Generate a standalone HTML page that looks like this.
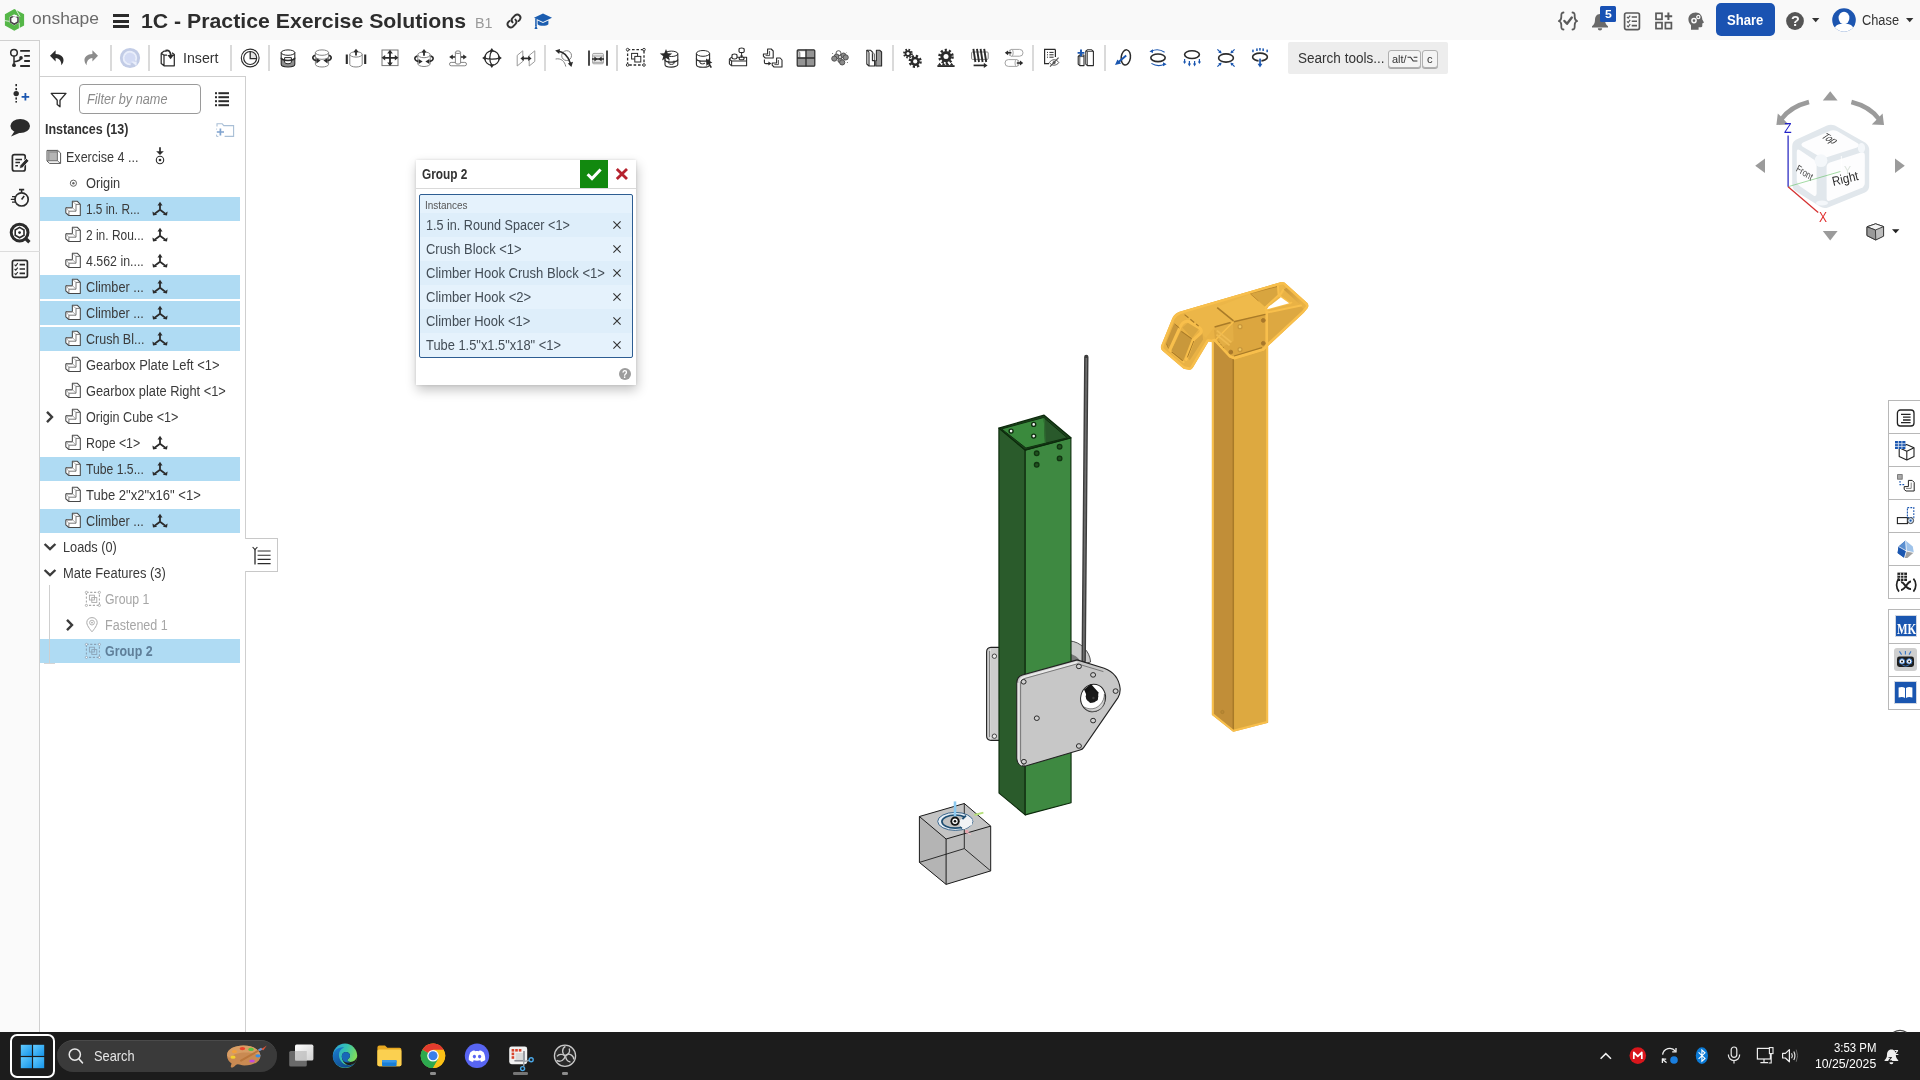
<!DOCTYPE html>
<html><head><meta charset="utf-8"><title>Onshape</title>
<style>
html,body{margin:0;padding:0;}
body{width:1920px;height:1080px;overflow:hidden;background:#fff;font-family:"Liberation Sans",sans-serif;position:relative;}
.a{position:absolute;display:block;}
.t{position:absolute;white-space:nowrap;transform-origin:0 50%;}
#w{position:absolute;left:0;top:0;width:1920px;height:1080px;will-change:transform;}
</style></head><body><div id="w">
<div class="a" style="left:0px;top:0px;width:1920px;height:40px;background:#f9f9f9;"></div>
<div class="a" style="left:0px;top:40px;width:1920px;height:36px;background:#fff;"></div>
<div class="a" style="left:0px;top:40px;width:40px;height:992px;background:#fafafa;border-right:1px solid #d0d0d0;box-sizing:border-box;"></div>
<div class="a" style="left:40px;top:76px;width:206px;height:956px;background:#fff;border-top:1px solid #cfcfcf;border-right:1px solid #cfcfcf;box-sizing:border-box;"></div>
<div class="a" style="left:0px;top:1032px;width:1920px;height:48px;background:#1c1c1c;"></div>
<div class="a" style="left:0px;top:40px;width:40px;height:1px;background:#d0d0d0;"></div>
<svg class="a" style="left:3px;top:7px;" width="24" height="26" viewBox="0 0 24 26">
<path d="M11.3 1.9 L21.1 7.3 V18.5 L11.3 23.7 L1.9 18.5 V7.3 Z M11.3 7.2 L6.5 10 V15.6 L11.3 18.4 L16.1 15.6 V10 Z" fill="#55b748" fill-rule="evenodd"/>
<path d="M13.2 3 L17 9.6 M1.9 13.6 L6.6 14.4 M16.2 15.8 L16.4 21" stroke="#f9f9f9" stroke-width="0.8"/>
<polygon points="11.3,8.6 15,10.8 15,15 11.3,17.2 7.6,15 7.6,10.8" fill="#fbfbfb" stroke="#4a4a4a" stroke-width="1.6"/>
<path d="M9.6 8.8 L13 8.8 L13 10.6" fill="none" stroke="#fbfbfb" stroke-width="1.4"/>
</svg>
<div class="t" style="left:31.80px;top:9.00px;font-size:17px;line-height:19.000px;color:#6a6a6a;transform:scaleX(1.0272);">onshape</div>
<div class="a" style="left:113px;top:14px;width:16px;height:3px;background:#2b2b2b;"></div>
<div class="a" style="left:113px;top:19.5px;width:16px;height:3px;background:#2b2b2b;"></div>
<div class="a" style="left:113px;top:25px;width:16px;height:3px;background:#2b2b2b;"></div>
<div class="t" style="left:141.20px;top:9.00px;font-size:20.5px;line-height:23.000px;color:#2d2d2d;transform:scaleX(1.0373);font-weight:bold;">1C - Practice Exercise Solutions</div>
<div class="t" style="left:475.00px;top:15.00px;font-size:14.5px;line-height:16.000px;color:#9a9a9a;transform:scaleX(0.9867);">B1</div>
<svg class="a" style="left:504px;top:11px;" width="20" height="20" viewBox="0 0 20 20"><g fill="none" stroke="#333" stroke-width="1.9" stroke-linecap="round">
<path d="M8.6 11.4 a3.2 3.2 0 0 1 0 -4.5 l2.6 -2.6 a3.2 3.2 0 0 1 4.5 4.5 l-1.3 1.3"/>
<path d="M11.4 8.6 a3.2 3.2 0 0 1 0 4.5 l-2.6 2.6 a3.2 3.2 0 0 1 -4.5 -4.5 l1.3 -1.3"/></g></svg>
<svg class="a" style="left:533px;top:11px;" width="20" height="20" viewBox="0 0 20 20"><g fill="#1b5db0"><polygon points="10,2.5 19,6.8 10,11 1,6.8"/>
<path d="M4.6 9.4 V13.2 C6.5 15.4 13.5 15.4 15.4 13.2 V9.4 L10 12 Z"/>
<rect x="2.2" y="7.5" width="1.5" height="7.5"/><polygon points="1.5,18 4.5,18 3,13.5"/></g></svg>
<svg class="a" style="left:1556px;top:10px;" width="24" height="22" viewBox="0 0 24 22"><g fill="none" stroke="#5a5a5a" stroke-width="1.8" stroke-linecap="round" stroke-linejoin="round">
<path d="M7.5 2.5 C5 2.5 5.3 5 5.3 7 C5.3 9.5 4.5 10.5 2.8 11 C4.5 11.5 5.3 12.5 5.3 15 C5.3 17 5 19.5 7.5 19.5"/>
<path d="M16.5 2.5 C19 2.5 18.7 5 18.7 7 C18.7 9.5 19.5 10.5 21.2 11 C19.5 11.5 18.7 12.5 18.7 15 C18.7 17 19 19.5 16.5 19.5"/>
<path d="M8.4 11 L11 13.8 L15.8 7.6" stroke-width="2.4"/></g></svg>
<svg class="a" style="left:1590px;top:12px;" width="20" height="20" viewBox="0 0 20 20"><g fill="#6a6a6a"><path d="M10 2 C6.5 2 5 5 5 8 C5 11.5 3.5 13 2 14.3 V15.4 H18 V14.3 C16.5 13 15 11.5 15 8 C15 5 13.5 2 10 2 Z"/>
<path d="M7.8 16.2 a2.2 2.2 0 0 0 4.4 0 Z"/></g></svg>
<div class="a" style="left:1600px;top:6px;width:16px;height:15.5px;background:#1851b4;border-radius:1.5px;"></div>
<div class="t" style="left:1604.80px;top:8.00px;font-size:11.5px;line-height:12.000px;color:#fff;transform:scaleX(1.0632);font-weight:bold;">5</div>
<svg class="a" style="left:1622px;top:11px;" width="20" height="20" viewBox="0 0 20 20"><rect x="2.6" y="2" width="14.8" height="16.6" rx="1.8" fill="none" stroke="#5a5a5a" stroke-width="1.7"/>
<g stroke="#5a5a5a" stroke-width="1.6" fill="none"><path d="M9.7 6 H15 M9.7 10.3 H15 M9.7 14.6 H15"/>
<path d="M5 6 l1.2 1.2 l2 -2.6 M5 10.3 l1.2 1.2 l2 -2.6 M5 14.6 l1.2 1.2 l2 -2.6" stroke-width="1.2"/></g></svg>
<svg class="a" style="left:1654px;top:11px;" width="20" height="20" viewBox="0 0 20 20"><g fill="none" stroke="#5a5a5a" stroke-width="1.7"><rect x="2" y="2.3" width="6" height="6"/><rect x="2" y="11.6" width="6" height="6"/><rect x="11.4" y="11.6" width="6" height="6"/>
<path d="M14.4 1.5 V9 M10.7 5.3 H18.2" stroke-width="2"/></g></svg>
<svg class="a" style="left:1686px;top:11px;" width="20" height="20" viewBox="0 0 20 20"><path d="M9.8 1.6 C5.2 1.6 2.4 4.8 2.4 8.6 C2.4 11.3 3.8 13 5 14.2 V18.8 H12.6 V16.2 H15 C16 16.2 16.3 15.6 16.3 14.8 V12.4 L18 11.6 L16.3 8.4 C16.3 4.4 13.6 1.6 9.8 1.6 Z" fill="#666"/>
<circle cx="8" cy="9.6" r="2.1" fill="none" stroke="#f9f9f9" stroke-width="1.5"/><circle cx="12.3" cy="6" r="1.6" fill="none" stroke="#f9f9f9" stroke-width="1.3"/></svg>
<div class="a" style="left:1716px;top:3px;width:59px;height:33px;background:#1a53b2;border-radius:5px;"></div>
<div class="t" style="left:1727.00px;top:11.00px;font-size:15px;line-height:17.000px;color:#fff;transform:scaleX(0.8731);font-weight:bold;">Share</div>
<svg class="a" style="left:1785px;top:11px;" width="20" height="20" viewBox="0 0 20 20"><circle cx="10" cy="10" r="8.9" fill="#555"/></svg>
<div class="t" style="left:1790.60px;top:12.20px;font-size:15.5px;line-height:17.000px;color:#f9f9f9;transform:scaleX(0.9294);font-weight:bold;">?</div>
<svg class="a" style="left:1812px;top:18px;" width="8" height="5" viewBox="0 0 8 5"><polygon points="0,0 7.4,0 3.7,4.2" fill="#333"/></svg>
<svg class="a" style="left:1831px;top:8px;" width="26" height="24" viewBox="0 0 26 24"><defs><clipPath id="avc"><circle cx="13" cy="12" r="11.8"/></clipPath></defs>
<circle cx="13" cy="12" r="11.8" fill="#1c55b0"/>
<g clip-path="url(#avc)" fill="#fff"><ellipse cx="13" cy="10" rx="5.4" ry="6.2"/><path d="M2.5 25 C2.5 17.5 7 15.8 13 15.8 C19 15.8 23.5 17.5 23.5 25 Z"/></g></svg>
<div class="t" style="left:1861.60px;top:11.00px;font-size:15.5px;line-height:17.000px;color:#333;transform:scaleX(0.8258);">Chase</div>
<svg class="a" style="left:1906px;top:18px;" width="8" height="5" viewBox="0 0 8 5"><polygon points="0,0 7.4,0 3.7,4.2" fill="#333"/></svg>
<div class="a" style="left:110px;top:45px;width:2px;height:26px;background:#dadada;"></div>
<div class="a" style="left:148px;top:45px;width:2px;height:26px;background:#dadada;"></div>
<div class="a" style="left:230px;top:45px;width:2px;height:26px;background:#dadada;"></div>
<div class="a" style="left:268px;top:45px;width:2px;height:26px;background:#dadada;"></div>
<div class="a" style="left:544px;top:45px;width:2px;height:26px;background:#dadada;"></div>
<div class="a" style="left:616px;top:45px;width:2px;height:26px;background:#dadada;"></div>
<div class="a" style="left:892px;top:45px;width:2px;height:26px;background:#dadada;"></div>
<div class="a" style="left:1032px;top:45px;width:2px;height:26px;background:#dadada;"></div>
<div class="a" style="left:1104px;top:45px;width:2px;height:26px;background:#dadada;"></div>
<svg class="a" style="left:45px;top:46px;" width="24" height="24" viewBox="0 0 24 24"><path d="M5 9.8 L10.6 4.2 V8 C15.6 8 18.9 11 18.5 14.6 C18.3 16.6 17.4 18.2 16.3 19.2 C16.6 15.6 14.6 12.2 10.6 12 V15.6 Z" fill="#2b2b2b"/></svg>
<svg class="a" style="left:79px;top:46px;" width="24" height="24" viewBox="0 0 24 24"><path d="M19 9.8 L13.4 4.2 V8 C8.4 8 5.1 11 5.5 14.6 C5.7 16.6 6.6 18.2 7.7 19.2 C7.4 15.6 9.4 12.2 13.4 12 V15.6 Z" fill="#8c8c8c"/></svg>
<svg class="a" style="left:118px;top:46px;" width="24" height="24" viewBox="0 0 24 24"><circle cx="12" cy="12" r="10.1" fill="#c2cce6"/><circle cx="12" cy="12" r="5.4" fill="#d3dbf4"/>
<path d="M12.6 18.3 A6.3 6.3 0 1 1 17.6 14.8" fill="none" stroke="#e9eefb" stroke-width="1.9"/><polygon points="13.2,15.4 18.6,15.4 18.6,20.2 15.4,17.6" fill="#e9eefb"/></svg>
<svg class="a" style="left:156px;top:46px;" width="24" height="24" viewBox="0 0 24 24"><g fill="none" stroke="#2b2b2b" stroke-width="1.25" stroke-linejoin="round"><path d="M5.2 7.2 L8.2 5 H10.5 M5.2 7.2 V17.6 L8 19.8 H18.3 V8.6 L16 6.8 M8 9.2 V19.8 M5.2 7.2 L8 9.2 H11"/></g>
<path d="M9.5 4.6 C12.5 3.6 14.6 5.5 14.6 9" fill="none" stroke="#2b2b2b" stroke-width="1.7"/><polygon points="11.3,9 17.9,9 14.6,13.2" fill="#2b2b2b"/>
<path d="M15 9.2 H18.3" stroke="#2b2b2b" stroke-width="1.25"/></svg>
<div class="t" style="left:182.50px;top:49.00px;font-size:15.5px;line-height:17.000px;color:#333;transform:scaleX(0.9158);">Insert</div>
<svg class="a" style="left:238px;top:46px;" width="24" height="24" viewBox="0 0 24 24"><circle cx="12.2" cy="12" r="8.9" fill="#fff" stroke="#2b2b2b" stroke-width="1.1"/><path d="M12.2 12 V5.6 A6.4 6.4 0 0 1 18.6 12 Z" fill="#e4e4e4"/>
<circle cx="12.2" cy="12" r="6.5" fill="none" stroke="#2b2b2b" stroke-width="1.2"/><path d="M12.2 5.6 V12.6 H18.6" fill="none" stroke="#2b2b2b" stroke-width="1.3"/></svg>
<svg class="a" style="left:276px;top:46px;" width="24" height="24" viewBox="0 0 24 24"><path d="M5.2 13 V18.3 A6.8 2.7 0 0 0 18.8 18.3 V13 Z" fill="#8d8d8d"/>
<path d="M8.6 11.6 V16 Q8.6 17.8 12 17.8 Q15.4 17.8 15.4 16 V11.6 Z" fill="#fff" stroke="#2b2b2b" stroke-width="1"/>
<ellipse cx="12" cy="6.6" rx="6.8" ry="2.7" fill="#fff" stroke="#2b2b2b" stroke-width="1"/>
<path d="M5.2 6.6 V18.3 A6.8 2.7 0 0 0 18.8 18.3 V6.6" fill="none" stroke="#2b2b2b" stroke-width="1.1"/>
<path d="M5.2 11.8 A6.8 2.7 0 0 0 18.8 11.8" fill="none" stroke="#2b2b2b" stroke-width="1.6"/></svg>
<svg class="a" style="left:310px;top:46px;" width="24" height="24" viewBox="0 0 24 24"><ellipse cx="12" cy="6.6" rx="6.6" ry="2.7" fill="#fff" stroke="#777" stroke-width="0.9"/>
<path d="M5.4 6.6 V18.3 A6.6 2.7 0 0 0 18.6 18.3 V6.6" fill="none" stroke="#777" stroke-width="0.9"/>
<path d="M5.4 10.6 A6.6 2.7 0 0 0 18.6 10.6" fill="none" stroke="#777" stroke-width="0.9"/>
<path d="M5 9.2 C1.6 10.6 2.2 14 6.6 14.6 M19 9.2 C22.4 10.6 21.8 14 17.4 14.6" fill="none" stroke="#2b2b2b" stroke-width="1.6"/>
<polygon points="6.4,12 10.6,14.6 6.4,17.4" fill="#2b2b2b"/><polygon points="17.6,12 13.4,14.6 17.6,17.4" fill="#2b2b2b"/></svg>
<svg class="a" style="left:344px;top:46px;" width="24" height="24" viewBox="0 0 24 24"><ellipse cx="12" cy="8.4" rx="6.2" ry="2.7" fill="#fff" stroke="#777" stroke-width="0.9"/>
<path d="M5.8 8.4 V18.3 A6.2 2.7 0 0 0 18.2 18.3 V8.4" fill="none" stroke="#777" stroke-width="0.9"/>
<path d="M2.8 8.6 V18 M21.2 8.6 V18" stroke="#2b2b2b" stroke-width="2.1"/>
<path d="M12 5 V9.6" stroke="#2b2b2b" stroke-width="1.8"/><polygon points="9.3,6.2 12,2.8 14.7,6.2" fill="#2b2b2b"/></svg>
<svg class="a" style="left:378px;top:46px;" width="24" height="24" viewBox="0 0 24 24"><rect x="4" y="4" width="16" height="15.6" fill="#fff" stroke="#777" stroke-width="1"/>
<path d="M12 6 V18 M5.5 11.8 H18.5" stroke="#2b2b2b" stroke-width="1.8"/>
<polygon points="9.2,7.4 12,3.8 14.8,7.4" fill="#2b2b2b"/><polygon points="9.2,16.4 12,20 14.8,16.4" fill="#2b2b2b"/>
<polygon points="7.2,9 3.6,11.8 7.2,14.6" fill="#2b2b2b"/><polygon points="16.8,9 20.4,11.8 16.8,14.6" fill="#2b2b2b"/></svg>
<svg class="a" style="left:412px;top:46px;" width="24" height="24" viewBox="0 0 24 24"><ellipse cx="12" cy="8.8" rx="6.2" ry="2.9" fill="#fff" stroke="#777" stroke-width="0.9"/>
<path d="M5.8 8.8 V17.8 A6.2 2.7 0 0 0 18.2 17.8 V8.8" fill="none" stroke="#777" stroke-width="0.9"/>
<path d="M12 5.4 V9.8" stroke="#2b2b2b" stroke-width="1.8"/><polygon points="9.4,6.4 12,3 14.6,6.4" fill="#2b2b2b"/>
<path d="M5.2 10 C1.6 11.4 2.2 14.6 6.4 15.4 M18.8 10 C22.4 11.4 21.8 14.6 17.6 15.4" fill="none" stroke="#2b2b2b" stroke-width="1.6"/>
<polygon points="6.6,13 10.6,15.4 6.6,18" fill="#2b2b2b"/><polygon points="17.4,13 13.4,15.4 17.4,18" fill="#2b2b2b"/></svg>
<svg class="a" style="left:446px;top:46px;" width="24" height="24" viewBox="0 0 24 24"><path d="M5.2 16.4 H18.8 A1.6 1.6 0 0 1 18.8 19.8 H5.2 A1.6 1.6 0 0 1 5.2 16.4 Z" fill="#fff" stroke="#777" stroke-width="0.9"/>
<path d="M9.4 6.2 V17 A2.6 1.1 0 0 0 14.6 17 V6.2" fill="#fff" stroke="#777" stroke-width="0.9"/><ellipse cx="12" cy="6.2" rx="2.6" ry="1.3" fill="#fff" stroke="#777" stroke-width="0.9"/>
<path d="M5 11 H9 M15 11 H19" stroke="#2b2b2b" stroke-width="1.7"/><polygon points="6.8,8.4 3.2,11 6.8,13.6" fill="#2b2b2b"/><polygon points="17.2,8.4 20.8,11 17.2,13.6" fill="#2b2b2b"/></svg>
<svg class="a" style="left:480px;top:46px;" width="24" height="24" viewBox="0 0 24 24"><circle cx="12" cy="12" r="7.2" fill="none" stroke="#2b2b2b" stroke-width="1.3"/>
<path d="M12 4.8 C9 8 9 16 12 19.2 M4.8 12 C8 13.6 16 13.6 19.2 12" fill="none" stroke="#2b2b2b" stroke-width="1.3"/>
<polygon points="9.4,5.4 11.8,2 14.2,5.4" fill="#2b2b2b"/><polygon points="9.4,18.6 11.8,22 14.2,18.6" fill="#2b2b2b"/>
<polygon points="5.6,9.4 2.2,12 5.6,14.6" fill="#2b2b2b"/><polygon points="18.4,9.4 21.8,12 18.4,14.6" fill="#2b2b2b"/></svg>
<svg class="a" style="left:514px;top:46px;" width="24" height="24" viewBox="0 0 24 24"><path d="M3.2 9.4 L8.8 4.8 V15.4 L3.2 20 Z M15.2 9.4 L20.8 4.8 V15.4 L15.2 20 Z" fill="#fff" stroke="#9a9a9a" stroke-width="1"/>
<path d="M8 12.4 H16" stroke="#2b2b2b" stroke-width="1.7"/><polygon points="9.8,9.8 6.4,12.4 9.8,15" fill="#2b2b2b"/><polygon points="14.2,9.8 17.6,12.4 14.2,15" fill="#2b2b2b"/></svg>
<svg class="a" style="left:552px;top:46px;" width="24" height="24" viewBox="0 0 24 24"><circle cx="14.6" cy="9.6" r="4.9" fill="none" stroke="#777" stroke-width="0.9"/>
<path d="M3.6 13 C9 12 12.6 15 13.8 20.6" fill="none" stroke="#777" stroke-width="0.9"/>
<path d="M5.4 5 C11 5.6 16.4 10 18.6 18" fill="none" stroke="#2b2b2b" stroke-width="1.6"/>
<polygon points="3.2,4.6 8,3 7.2,8" fill="#2b2b2b"/><polygon points="15.8,17.4 21,15.8 19.4,21" fill="#2b2b2b"/></svg>
<svg class="a" style="left:586px;top:46px;" width="24" height="24" viewBox="0 0 24 24"><rect x="6.6" y="7.4" width="10.8" height="10.4" rx="1.2" fill="#e8e8e8" stroke="#9a9a9a" stroke-width="0.9"/>
<path d="M6.6 10 H17.4 M6.6 16.4 H17.4" stroke="#9a9a9a" stroke-width="0.8"/>
<path d="M3 4.4 V19.8 M21 4.4 V19.8" stroke="#2b2b2b" stroke-width="1.7"/><path d="M6 13 H18" stroke="#2b2b2b" stroke-width="1.5"/>
<polygon points="8.4,10.6 11.6,13 8.4,15.4" fill="#2b2b2b"/><polygon points="15.6,10.6 12.4,13 15.6,15.4" fill="#2b2b2b"/></svg>
<svg class="a" style="left:624px;top:46px;" width="24" height="24" viewBox="0 0 24 24"><rect x="3.6" y="3.6" width="16.4" height="15.4" fill="none" stroke="#2b2b2b" stroke-width="1.3" stroke-dasharray="2.6 1.8"/>
<g fill="#fff" stroke="#2b2b2b" stroke-width="0.9"><circle cx="3.6" cy="3.6" r="1.3"/><circle cx="20" cy="3.6" r="1.3"/><circle cx="3.6" cy="19" r="1.3"/><circle cx="20" cy="19" r="1.3"/></g>
<rect x="7.6" y="7.4" width="6" height="5.6" fill="#fff" stroke="#2b2b2b" stroke-width="1"/><rect x="10.8" y="10.4" width="6" height="5.6" fill="#fff" stroke="#2b2b2b" stroke-width="1"/></svg>
<svg class="a" style="left:658px;top:46px;" width="24" height="24" viewBox="0 0 24 24"><ellipse cx="13.4" cy="7.8" rx="6.4" ry="2.7" fill="#fff" stroke="#2b2b2b" stroke-width="1"/>
<path d="M7 7.8 V18.4 A6.4 2.7 0 0 0 19.8 18.4 V7.8" fill="none" stroke="#2b2b2b" stroke-width="1.1"/>
<path d="M7 13.4 A6.4 2.7 0 0 0 19.8 13.4" fill="none" stroke="#2b2b2b" stroke-width="1.4"/>
<path d="M10.8 14.6 V17.2 A2.6 1.2 0 0 0 16 17.2 V14.6" fill="none" stroke="#2b2b2b" stroke-width="1"/>
<polygon points="8,3 9.7,7.2 14.2,7.4 10.7,10.2 11.9,14.6 8,12.1 4.1,14.6 5.3,10.2 1.8,7.4 6.3,7.2" fill="#2b2b2b"/></svg>
<svg class="a" style="left:692px;top:46px;" width="24" height="24" viewBox="0 0 24 24"><ellipse cx="11" cy="7.4" rx="6.6" ry="2.9" fill="#fff" stroke="#2b2b2b" stroke-width="1"/>
<path d="M4.4 7.4 V18.4 A6.6 2.8 0 0 0 17.6 18.4 V7.4" fill="none" stroke="#2b2b2b" stroke-width="1.1"/>
<path d="M4.4 12.4 A6.6 2.8 0 0 0 17.6 12.4" fill="none" stroke="#2b2b2b" stroke-width="1.3"/>
<path d="M8 14.6 V17 A2.6 1.2 0 0 0 13 17" fill="none" stroke="#2b2b2b" stroke-width="1"/>
<polygon points="14,12.6 14.4,20 16.3,18.2 18.6,22 20,21.2 17.7,17.4 20.4,16.8" fill="#2b2b2b"/></svg>
<svg class="a" style="left:726px;top:46px;" width="24" height="24" viewBox="0 0 24 24"><g fill="#fff" stroke="#2b2b2b" stroke-width="1.1" stroke-linejoin="round"><path d="M3.4 13.2 L5.6 11.2 H20.6 V19.8 H5.6 L3.4 17.8 Z"/><path d="M5.6 15 H20.6 M3.4 13.2 L5.6 15 V19.8"/>
<path d="M6 11.6 V9.4 A2.5 1.4 0 0 1 11 9.4 V11.6 A2.5 1.4 0 0 1 6 11.6 Z"/><ellipse cx="15.6" cy="12.4" rx="2.5" ry="1.4"/>
<path d="M13 5.2 V3.4 A2.6 1.4 0 0 1 18.2 3.4 V5.2 A2.6 1.4 0 0 1 13 5.2 Z"/></g>
<path d="M15.6 6.6 V11" stroke="#2b2b2b" stroke-width="1"/><polygon points="14,9.6 17.2,9.6 15.6,12" fill="#2b2b2b"/></svg>
<svg class="a" style="left:760px;top:46px;" width="24" height="24" viewBox="0 0 24 24"><g fill="#fff" stroke="#2b2b2b" stroke-width="1.1" stroke-linejoin="round"><path d="M7.6 3 H11.2 L13.2 5 V12 H5.2 L3.4 10.2 V8 H7.6 Z"/><path d="M5.6 9.6 H9.6 V5" fill="none" stroke-width="0.8"/>
<path d="M16.6 12 H20.2 L22 14 V21 H14 L12.2 19.2 V17 H16.6 Z"/><path d="M14.4 18.6 H18.4 V14" fill="none" stroke-width="0.8"/></g>
<path d="M4.4 13.4 V16.2 Q4.4 17.6 5.8 17.6 H9" fill="none" stroke="#2b2b2b" stroke-width="1.1"/><polygon points="8.4,15.6 11.4,17.6 8.4,19.6" fill="#2b2b2b"/></svg>
<svg class="a" style="left:794px;top:46px;" width="24" height="24" viewBox="0 0 24 24"><rect x="3.2" y="3.8" width="17.6" height="16.4" rx="1" fill="#949494" stroke="#2b2b2b" stroke-width="1.2"/>
<rect x="4.6" y="5.2" width="7" height="6.4" fill="#fff"/><path d="M12 3.8 V20.2 M3.2 12 H20.8" stroke="#2b2b2b" stroke-width="1.3"/>
<path d="M4.4 5 L5.8 6.4 V11.4" fill="none" stroke="#2b2b2b" stroke-width="0.7"/></svg>
<svg class="a" style="left:828px;top:46px;" width="24" height="24" viewBox="0 0 24 24"><g stroke="#4a4a4a" stroke-width="0.9"><circle cx="10.5" cy="7.2" r="2.5" fill="#fff"/><circle cx="8.6" cy="10.4" r="2.4" fill="#8a8a8a"/><circle cx="6.3" cy="12.6" r="2.6" fill="#8a8a8a"/><circle cx="15.5" cy="9.4" r="2.4" fill="#8a8a8a"/>
<circle cx="17.7" cy="11.4" r="2.6" fill="#8a8a8a"/><circle cx="12.2" cy="14.4" r="2.3" fill="#8a8a8a"/><circle cx="14.2" cy="16.4" r="2.6" fill="#8a8a8a"/><circle cx="12" cy="11" r="1.5" fill="#fff"/></g>
<g fill="#555"><circle cx="4.6" cy="7.6" r="0.5"/><circle cx="19.4" cy="16.6" r="0.5"/><circle cx="18.6" cy="6.6" r="0.4"/></g></svg>
<svg class="a" style="left:862px;top:46px;" width="24" height="24" viewBox="0 0 24 24"><g stroke="#2b2b2b" stroke-width="1.1" stroke-linejoin="round"><path d="M4.8 4.2 H8.4 L10.4 6 V14.6 H12.6 V20 H7 L4.8 18 Z" fill="#fff"/><path d="M7 6.2 V20 M4.8 4.2 L7 6.2" fill="none"/>
<path d="M14.4 4.2 H17.6 L19.6 6 V20 H13.8 V14.6 H14.4 Z" fill="#9a9a9a"/><path d="M10.4 6 L12.4 8 V14.6" fill="#e0e0e0" stroke-width="0.7"/></g></svg>
<svg class="a" style="left:900px;top:46px;" width="24" height="24" viewBox="0 0 24 24"><circle cx="8" cy="7.6" r="3.3000000000000003" fill="#2b2b2b"/><circle cx="8" cy="7.6" r="3.9000000000000004" fill="none" stroke="#2b2b2b" stroke-width="2.0" stroke-dasharray="1.593 1.470"/><circle cx="8" cy="7.6" r="1.5" fill="#fff"/><circle cx="15.2" cy="15.4" r="4.6000000000000005" fill="#2b2b2b"/><circle cx="15.2" cy="15.4" r="5.4" fill="none" stroke="#2b2b2b" stroke-width="2.4" stroke-dasharray="2.205 2.036"/><circle cx="15.2" cy="15.4" r="2.1" fill="#fff"/></svg>
<svg class="a" style="left:934px;top:46px;" width="24" height="24" viewBox="0 0 24 24"><circle cx="12" cy="10.6" r="5.6000000000000005" fill="#2b2b2b"/><circle cx="12" cy="10.6" r="6.5" fill="none" stroke="#2b2b2b" stroke-width="2.599999999999999" stroke-dasharray="2.124 1.960"/><circle cx="12" cy="10.6" r="2.5" fill="#fff"/><rect x="3.4" y="19.2" width="17.2" height="1.8" fill="#2b2b2b"/><path d="M3.6 19.6 L5.6 16.8 L7.6 19.6 L9.6 16.8 L11.6 19.6 L13.6 16.8 L15.6 19.6 L17.6 16.8 L19.6 19.6" fill="#2b2b2b"/></svg>
<svg class="a" style="left:968px;top:46px;" width="24" height="24" viewBox="0 0 24 24"><rect x="3.6" y="6" width="16.6" height="7.4" rx="1" fill="#fff" stroke="#777" stroke-width="0.9"/>
<path d="M5.4 2.8 L7.4 16 M9 2.8 L11 16 M12.6 2.8 L14.6 16 M16.2 2.8 L18.2 16" stroke="#2b2b2b" stroke-width="1.9"/>
<path d="M5.6 19.4 H17" stroke="#2b2b2b" stroke-width="1.7"/><polygon points="15.8,16.8 19.6,19.4 15.8,22" fill="#2b2b2b"/></svg>
<svg class="a" style="left:1002px;top:46px;" width="24" height="24" viewBox="0 0 24 24"><g fill="#fff" stroke="#9a9a9a" stroke-width="0.9"><rect x="6.6" y="3.4" width="14.4" height="6.8" rx="3.4"/><rect x="3" y="13.6" width="14.4" height="6.8" rx="3.4"/><ellipse cx="9.6" cy="6.8" rx="1.6" ry="3.4"/><ellipse cx="14.6" cy="17" rx="1.6" ry="3.4"/></g>
<path d="M5 6.8 H9.4 M14.8 17 H19" stroke="#2b2b2b" stroke-width="1.6"/><polygon points="6,4.4 2.8,6.8 6,9.2" fill="#2b2b2b"/><polygon points="18,14.6 21.2,17 18,19.4" fill="#2b2b2b"/></svg>
<svg class="a" style="left:1040px;top:46px;" width="24" height="24" viewBox="0 0 24 24"><path d="M15.4 3.4 H4.6 V17.6 H9" fill="none" stroke="#2b2b2b" stroke-width="1.2"/><path d="M15.4 3.4 V11" stroke="#2b2b2b" stroke-width="1.2"/>
<path d="M7 6.4 H8 M9.4 6.4 H13.6 M7 8.8 H8 M9.4 8.8 H13.6 M7 11.2 H8 M9.4 11.2 H13.6" stroke="#2b2b2b" stroke-width="1"/>
<path d="M9.4 16.6 C11.6 12.8 16.6 12.8 18.8 16.6 C16.6 20 11.6 20 9.4 16.6 Z" fill="none" stroke="#555" stroke-width="1"/><circle cx="14.1" cy="16.6" r="1.5" fill="#555"/>
<path d="M10 20.6 L18.6 11.6" stroke="#555" stroke-width="1.2"/></svg>
<svg class="a" style="left:1074px;top:46px;" width="24" height="24" viewBox="0 0 24 24"><g fill="#fff" stroke="#2b2b2b" stroke-width="1.1" stroke-linejoin="round"><path d="M4.2 10.4 L5.8 9 H10 V19.6 H5.8 L4.2 18.2 Z"/><path d="M5.8 10.6 V19.6 M4.2 10.4 L5.8 10.6 H10" fill="none" stroke-width="0.8"/>
<path d="M11.8 5.2 L13.4 3.8 H17.6 L19.4 5.4 V19.6 H13.4 L11.8 18.2 Z"/><path d="M13.4 5.4 V19.6 M13.4 5.4 H19.4 M11.8 5.2 L13.4 5.4" fill="none" stroke-width="0.8"/></g>
<path d="M7 3.6 V10.2 M3.6 6.9 H10.4" stroke="#1a56b0" stroke-width="1.9"/></svg>
<svg class="a" style="left:1112px;top:46px;" width="24" height="24" viewBox="0 0 24 24"><ellipse cx="13.8" cy="11.4" rx="4.6" ry="7.6" fill="none" stroke="#2b2b2b" stroke-width="1.5" transform="rotate(8 13.8 11.4)"/>
<path d="M14.2 9.6 L6 16.4" stroke="#1a56b0" stroke-width="2"/><polygon points="3,19 5.4,13.4 9.2,17.6" fill="#1a56b0"/></svg>
<svg class="a" style="left:1146px;top:46px;" width="24" height="24" viewBox="0 0 24 24"><ellipse cx="12" cy="11.8" rx="7.2" ry="3.8" fill="none" stroke="#2b2b2b" stroke-width="1.6"/>
<path d="M5.4 5.2 C9 3.4 14.4 3.4 18.6 6.2 M18.6 18 C15 20 9.6 20 5.4 17.4" fill="none" stroke="#1a56b0" stroke-width="1.1"/>
<polygon points="3.4,5.4 7,3.2 7,7" fill="#1a56b0"/><polygon points="20.6,18.2 17,16.2 17,20.2" fill="#1a56b0"/></svg>
<svg class="a" style="left:1180px;top:46px;" width="24" height="24" viewBox="0 0 24 24"><ellipse cx="12" cy="8.6" rx="7.4" ry="3.9" fill="none" stroke="#2b2b2b" stroke-width="1.6"/>
<g stroke="#1a56b0" stroke-width="1.2"><path d="M4.6 13 V16 M9.4 15 V18.4 M14.6 15 V18.4 M19.4 13 V16"/></g>
<g fill="#1a56b0"><polygon points="3,15.4 6.2,15.4 4.6,18"/><polygon points="7.8,17.6 11,17.6 9.4,20.4"/><polygon points="13,17.6 16.2,17.6 14.6,20.4"/><polygon points="17.8,15.4 21,15.4 19.4,18"/></g></svg>
<svg class="a" style="left:1214px;top:46px;" width="24" height="24" viewBox="0 0 24 24"><ellipse cx="12" cy="12" rx="7.4" ry="4.1" fill="none" stroke="#2b2b2b" stroke-width="1.6"/>
<g stroke="#1a56b0" stroke-width="1.2"><path d="M3.4 3.4 L6.4 6.2 M20.6 3.4 L17.6 6.2 M3.4 20.6 L6.4 17.8 M20.6 20.6 L17.6 17.8"/></g>
<g fill="#1a56b0"><polygon points="7.6,7.4 4.2,6.6 6.8,4.2"/><polygon points="16.4,7.4 19.8,6.6 17.2,4.2"/><polygon points="7.6,16.6 4.2,17.4 6.8,19.8"/><polygon points="16.4,16.6 19.8,17.4 17.2,19.8"/></g></svg>
<svg class="a" style="left:1248px;top:46px;" width="24" height="24" viewBox="0 0 24 24"><ellipse cx="12" cy="11" rx="7.4" ry="3.9" fill="none" stroke="#2b2b2b" stroke-width="1.6"/><rect x="10.6" y="13" width="2.8" height="3" fill="#fff"/>
<g fill="#1a56b0"><rect x="4.2" y="3.6" width="1.5" height="2.6"/><rect x="8.2" y="2.4" width="1.5" height="2.6"/><rect x="11.2" y="2" width="1.5" height="2.6"/><rect x="14.4" y="2.4" width="1.5" height="2.6"/><rect x="18.4" y="3.6" width="1.5" height="2.6"/>
<rect x="11.2" y="12.6" width="1.7" height="6"/><polygon points="9.6,17.8 14.4,17.8 12,21.6"/></g></svg>
<div class="a" style="left:1288px;top:42px;width:160px;height:32px;background:#ededed;border-radius:2px;"></div>
<div class="t" style="left:1298.00px;top:49.00px;font-size:15.5px;line-height:17.000px;color:#333;transform:scaleX(0.8731);">Search tools...</div>
<div class="a" style="left:1388px;top:50px;width:32.5px;height:18px;background:#f4f4f4;border:1px solid #b0b0b0;border-radius:3px;box-sizing:border-box;box-shadow:0 1px 0 #aaa;"></div>
<div class="a" style="left:1421.5px;top:50px;width:16.5px;height:18px;background:#f4f4f4;border:1px solid #b0b0b0;border-radius:3px;box-sizing:border-box;box-shadow:0 1px 0 #aaa;"></div>
<div class="t" style="left:1392.00px;top:53.00px;font-size:11.5px;line-height:12.000px;color:#333;transform:scaleX(0.9517);">alt/</div>
<svg class="a" style="left:1407px;top:55px;" width="11" height="8" viewBox="0 0 11 8"><path d="M0.5 2.2 H3.6 L6.2 6 H10.4 M6.6 2.2 H10.4" fill="none" stroke="#333" stroke-width="1.1"/></svg>
<div class="t" style="left:1426.80px;top:53.00px;font-size:11.5px;line-height:12.000px;color:#333;transform:scaleX(0.9739);">c</div>
<svg class="a" style="left:8px;top:46px;" width="24" height="24" viewBox="0 0 24 24"><g fill="none" stroke="#2b2b2b" stroke-width="1.5"><circle cx="6" cy="6.7" r="3.3"/><path d="M6 10 V18.6"/><path d="M6 15.7 C9.6 15.4 12.4 14.8 13 12"/></g>
<path d="M12.2 4.9 H21.9 M16.2 9.9 H21.9 M16.2 15 H21.9 M12.2 20 H21.9" stroke="#2b2b2b" stroke-width="1.8"/>
<circle cx="6" cy="19.2" r="1.9" fill="#2b2b2b"/><circle cx="13" cy="11.9" r="1.8" fill="#2b2b2b"/></svg>
<svg class="a" style="left:8px;top:82px;" width="24" height="22" viewBox="0 0 24 22"><g fill="#2b2b2b"><rect x="7.4" y="2" width="1.6" height="2.2"/><rect x="7.4" y="6" width="1.6" height="2.2"/><circle cx="8.2" cy="11.6" r="2.7"/><rect x="7.4" y="15.4" width="1.6" height="2.2"/><rect x="7.4" y="19" width="1.6" height="1.6"/></g>
<path d="M17.4 11 V18.6 M13.6 14.8 H21.2" stroke="#1a56b0" stroke-width="1.8"/></svg>
<svg class="a" style="left:8px;top:116px;" width="24" height="22" viewBox="0 0 24 22"><ellipse cx="12.2" cy="10" rx="9.8" ry="7" fill="#2b2b2b"/><polygon points="7,14.6 3,20.4 12.4,16.4" fill="#2b2b2b"/></svg>
<svg class="a" style="left:8px;top:151px;" width="24" height="24" viewBox="0 0 24 24"><rect x="4.4" y="3.6" width="12.8" height="16.4" rx="2" fill="none" stroke="#2b2b2b" stroke-width="1.7"/>
<path d="M7.4 8.4 H14 M7.4 11.6 H12 M7.4 14.8 H10" stroke="#2b2b2b" stroke-width="1.5"/>
<path d="M11.4 17.6 L12 14.4 L18.4 7.4 L21 9.8 L14.6 16.8 Z" fill="#2b2b2b" stroke="#fafafa" stroke-width="0.8"/></svg>
<svg class="a" style="left:8px;top:186px;" width="24" height="24" viewBox="0 0 24 24"><circle cx="13.6" cy="13.4" r="6.6" fill="none" stroke="#2b2b2b" stroke-width="1.7"/><path d="M11 3.6 H16.2 M13.6 3.6 V6.6 M13.6 13.4 L16.2 10" stroke="#2b2b2b" stroke-width="1.6"/>
<path d="M4 10.6 H8 M2.8 13.4 H7 M4 16.2 H8" stroke="#2b2b2b" stroke-width="1.3"/></svg>
<svg class="a" style="left:8px;top:221px;" width="24" height="24" viewBox="0 0 24 24"><circle cx="11.6" cy="11.6" r="8.4" fill="#fff" stroke="#2b2b2b" stroke-width="3"/><path d="M17.6 17.6 L21.4 21.2" stroke="#2b2b2b" stroke-width="3.4"/>
<polygon points="11.6,6.4 16,9 16,14.2 11.6,16.8 7.2,14.2 7.2,9" fill="none" stroke="#2b2b2b" stroke-width="1.6"/><circle cx="11.6" cy="11.6" r="1.4" fill="#2b2b2b"/></svg>
<div class="a" style="left:0px;top:251px;width:40px;height:1px;background:#dcdcdc;"></div>
<svg class="a" style="left:8px;top:257px;" width="24" height="24" viewBox="0 0 24 24"><rect x="4.4" y="3.4" width="15" height="17" rx="1.8" fill="none" stroke="#2b2b2b" stroke-width="1.7"/>
<g stroke="#2b2b2b" fill="none"><path d="M11.6 7.6 H17 M11.6 12 H17 M11.6 16.4 H17" stroke-width="1.6"/><path d="M6.6 7.6 l1.2 1.2 l2 -2.6 M6.6 12 l1.2 1.2 l2 -2.6 M6.6 16.4 l1.2 1.2 l2 -2.6" stroke-width="1.1"/></g></svg>
<svg class="a" style="left:48px;top:90px;" width="22" height="20" viewBox="0 0 22 20"><path d="M3.2 3.4 H18 L12 10.2 V16.8 L9.2 14.6 V10.2 Z" fill="none" stroke="#2b2b2b" stroke-width="1.3" stroke-linejoin="round"/></svg>
<div class="a" style="left:79px;top:84px;width:122px;height:30px;background:#fff;border:1px solid #9a9a9a;border-radius:4px;box-sizing:border-box;"></div>
<div class="t" style="left:86.60px;top:90.00px;font-size:15px;line-height:17.000px;color:#8a8a8a;transform:scaleX(0.8471);font-style:italic;">Filter by name</div>
<svg class="a" style="left:213px;top:90px;" width="18" height="18" viewBox="0 0 18 18"><g fill="#2b2b2b"><rect x="2" y="2.2" width="2" height="2"/><rect x="5.4" y="2.2" width="10.6" height="2"/><rect x="2" y="6.2" width="2" height="2"/><rect x="5.4" y="6.2" width="10.6" height="2"/>
<rect x="2" y="10.2" width="2" height="2"/><rect x="5.4" y="10.2" width="10.6" height="2"/><rect x="2" y="14.2" width="2" height="2"/><rect x="5.4" y="14.2" width="10.6" height="2"/></g></svg>
<div class="t" style="left:44.60px;top:121.00px;font-size:14px;line-height:16.000px;color:#333;transform:scaleX(0.8932);font-weight:bold;">Instances (13)</div>
<svg class="a" style="left:214px;top:121px;" width="22" height="18" viewBox="0 0 22 18"><path d="M3 5.6 V2.8 H8.2 L9.8 4.6 H19.6 V15.4 H10.6" fill="none" stroke="#a9bfd6" stroke-width="1.1"/>
<path d="M6.4 7.4 V14.6 M2.8 11 H10" stroke="#7fa3cf" stroke-width="1.7"/><path d="M2.6 7.6 V8.6 M2.6 13.6 V15.4 H4.4" stroke="#a9bfd6" stroke-width="1" fill="none"/></svg>
<div class="a" style="left:40px;top:197px;width:200px;height:24px;background:#afdbf3;"></div>
<div class="a" style="left:40px;top:275px;width:200px;height:24px;background:#afdbf3;"></div>
<div class="a" style="left:40px;top:301px;width:200px;height:24px;background:#afdbf3;"></div>
<div class="a" style="left:40px;top:327px;width:200px;height:24px;background:#afdbf3;"></div>
<div class="a" style="left:40px;top:457px;width:200px;height:24px;background:#afdbf3;"></div>
<div class="a" style="left:40px;top:509px;width:200px;height:24px;background:#afdbf3;"></div>
<div class="a" style="left:40px;top:639px;width:200px;height:24px;background:#afdbf3;"></div>
<svg class="a" style="left:45px;top:148px;" width="18" height="17" viewBox="0 0 18 17"><path d="M2 2.4 H12.6 L15.6 5 V15.4 H4.6 L2 13 Z" fill="#fff" stroke="#555" stroke-width="1" stroke-linejoin="round"/>
<rect x="2.6" y="3" width="9.6" height="9.6" fill="#9a9a9a"/><rect x="4.6" y="5" width="7.6" height="7.6" fill="#b5b5b5"/><path d="M12.4 2.6 V12.8 H2.2 M12.4 12.8 L15.4 15.2" fill="none" stroke="#555" stroke-width="0.8"/></svg>
<div class="t" style="left:66.30px;top:150.00px;font-size:13.8px;line-height:15.000px;color:#3a3a3a;transform:scaleX(0.9090);">Exercise 4 ...</div>
<svg class="a" style="left:152px;top:146px;" width="16" height="19" viewBox="0 0 16 19"><path d="M8 1.2 V6.4" stroke="#2b2b2b" stroke-width="1.7"/><polygon points="4.2,5.2 11.8,5.2 8,9" fill="#2b2b2b"/>
<circle cx="8" cy="14" r="3.7" fill="none" stroke="#2b2b2b" stroke-width="1.1"/><circle cx="8" cy="14" r="1.3" fill="#2b2b2b"/></svg>
<svg class="a" style="left:68px;top:178px;" width="11" height="11" viewBox="0 0 11 11"><circle cx="5.4" cy="5.2" r="3.1" fill="none" stroke="#666" stroke-width="1"/><circle cx="5.4" cy="5.2" r="1.2" fill="#666"/></svg>
<div class="t" style="left:86.30px;top:176.00px;font-size:13.8px;line-height:15.000px;color:#3a3a3a;transform:scaleX(0.9291);">Origin</div>
<svg class="a" style="left:65.4px;top:200px;" width="17" height="18" viewBox="0 0 17 18"><path d="M7.35 1.3 H12.4 L15.3 4.3 V15.5 H3.9 L0.8 12.8 V8.2 L1.4 7.6 H7.35 Z" fill="#fff" stroke="#484848" stroke-width="1.05" stroke-linejoin="round"/>
<path d="M3.9 15.5 V11.2 H11 V4.4 H15.3" fill="none" stroke="#6a6a6a" stroke-width="0.9"/><path d="M0.9 8 L3.9 11.2 M7.4 7.6 L11 11.2 M7.6 1.5 L11 4.4" fill="none" stroke="#8a8a8a" stroke-width="0.7"/>
<path d="M1.6 8 H7.4" stroke="#9a9a9a" stroke-width="1"/></svg>
<div class="t" style="left:86.30px;top:202.00px;font-size:13.8px;line-height:15.000px;color:#3a3a3a;transform:scaleX(0.8554);">1.5 in. R...</div>
<svg class="a" style="left:152px;top:201px;" width="16" height="16" viewBox="0 0 16 16"><path d="M8 3.6 V8.8 L3 12.4 M8 8.8 L13 12.4" fill="none" stroke="#2b2b2b" stroke-width="1.8"/>
<polygon points="5.5,4.6 8,0.8 10.5,4.6" fill="#2b2b2b"/><polygon points="0.4,10.4 1,14.6 5.2,13.8" fill="#2b2b2b"/><polygon points="15.6,10.4 15,14.6 10.8,13.8" fill="#2b2b2b"/></svg>
<svg class="a" style="left:65.4px;top:226px;" width="17" height="18" viewBox="0 0 17 18"><path d="M7.35 1.3 H12.4 L15.3 4.3 V15.5 H3.9 L0.8 12.8 V8.2 L1.4 7.6 H7.35 Z" fill="#fff" stroke="#484848" stroke-width="1.05" stroke-linejoin="round"/>
<path d="M3.9 15.5 V11.2 H11 V4.4 H15.3" fill="none" stroke="#6a6a6a" stroke-width="0.9"/><path d="M0.9 8 L3.9 11.2 M7.4 7.6 L11 11.2 M7.6 1.5 L11 4.4" fill="none" stroke="#8a8a8a" stroke-width="0.7"/>
<path d="M1.6 8 H7.4" stroke="#9a9a9a" stroke-width="1"/></svg>
<div class="t" style="left:86.30px;top:228.00px;font-size:13.8px;line-height:15.000px;color:#3a3a3a;transform:scaleX(0.8661);">2 in. Rou...</div>
<svg class="a" style="left:152px;top:227px;" width="16" height="16" viewBox="0 0 16 16"><path d="M8 3.6 V8.8 L3 12.4 M8 8.8 L13 12.4" fill="none" stroke="#2b2b2b" stroke-width="1.8"/>
<polygon points="5.5,4.6 8,0.8 10.5,4.6" fill="#2b2b2b"/><polygon points="0.4,10.4 1,14.6 5.2,13.8" fill="#2b2b2b"/><polygon points="15.6,10.4 15,14.6 10.8,13.8" fill="#2b2b2b"/></svg>
<svg class="a" style="left:65.4px;top:252px;" width="17" height="18" viewBox="0 0 17 18"><path d="M7.35 1.3 H12.4 L15.3 4.3 V15.5 H3.9 L0.8 12.8 V8.2 L1.4 7.6 H7.35 Z" fill="#fff" stroke="#484848" stroke-width="1.05" stroke-linejoin="round"/>
<path d="M3.9 15.5 V11.2 H11 V4.4 H15.3" fill="none" stroke="#6a6a6a" stroke-width="0.9"/><path d="M0.9 8 L3.9 11.2 M7.4 7.6 L11 11.2 M7.6 1.5 L11 4.4" fill="none" stroke="#8a8a8a" stroke-width="0.7"/>
<path d="M1.6 8 H7.4" stroke="#9a9a9a" stroke-width="1"/></svg>
<div class="t" style="left:86.30px;top:254.00px;font-size:13.8px;line-height:15.000px;color:#3a3a3a;transform:scaleX(0.8969);">4.562 in....</div>
<svg class="a" style="left:152px;top:253px;" width="16" height="16" viewBox="0 0 16 16"><path d="M8 3.6 V8.8 L3 12.4 M8 8.8 L13 12.4" fill="none" stroke="#2b2b2b" stroke-width="1.8"/>
<polygon points="5.5,4.6 8,0.8 10.5,4.6" fill="#2b2b2b"/><polygon points="0.4,10.4 1,14.6 5.2,13.8" fill="#2b2b2b"/><polygon points="15.6,10.4 15,14.6 10.8,13.8" fill="#2b2b2b"/></svg>
<svg class="a" style="left:65.4px;top:278px;" width="17" height="18" viewBox="0 0 17 18"><path d="M7.35 1.3 H12.4 L15.3 4.3 V15.5 H3.9 L0.8 12.8 V8.2 L1.4 7.6 H7.35 Z" fill="#fff" stroke="#484848" stroke-width="1.05" stroke-linejoin="round"/>
<path d="M3.9 15.5 V11.2 H11 V4.4 H15.3" fill="none" stroke="#6a6a6a" stroke-width="0.9"/><path d="M0.9 8 L3.9 11.2 M7.4 7.6 L11 11.2 M7.6 1.5 L11 4.4" fill="none" stroke="#8a8a8a" stroke-width="0.7"/>
<path d="M1.6 8 H7.4" stroke="#9a9a9a" stroke-width="1"/></svg>
<div class="t" style="left:86.30px;top:280.00px;font-size:13.8px;line-height:15.000px;color:#3a3a3a;transform:scaleX(0.9193);">Climber ...</div>
<svg class="a" style="left:152px;top:279px;" width="16" height="16" viewBox="0 0 16 16"><path d="M8 3.6 V8.8 L3 12.4 M8 8.8 L13 12.4" fill="none" stroke="#2b2b2b" stroke-width="1.8"/>
<polygon points="5.5,4.6 8,0.8 10.5,4.6" fill="#2b2b2b"/><polygon points="0.4,10.4 1,14.6 5.2,13.8" fill="#2b2b2b"/><polygon points="15.6,10.4 15,14.6 10.8,13.8" fill="#2b2b2b"/></svg>
<svg class="a" style="left:65.4px;top:304px;" width="17" height="18" viewBox="0 0 17 18"><path d="M7.35 1.3 H12.4 L15.3 4.3 V15.5 H3.9 L0.8 12.8 V8.2 L1.4 7.6 H7.35 Z" fill="#fff" stroke="#484848" stroke-width="1.05" stroke-linejoin="round"/>
<path d="M3.9 15.5 V11.2 H11 V4.4 H15.3" fill="none" stroke="#6a6a6a" stroke-width="0.9"/><path d="M0.9 8 L3.9 11.2 M7.4 7.6 L11 11.2 M7.6 1.5 L11 4.4" fill="none" stroke="#8a8a8a" stroke-width="0.7"/>
<path d="M1.6 8 H7.4" stroke="#9a9a9a" stroke-width="1"/></svg>
<div class="t" style="left:86.30px;top:306.00px;font-size:13.8px;line-height:15.000px;color:#3a3a3a;transform:scaleX(0.9193);">Climber ...</div>
<svg class="a" style="left:152px;top:305px;" width="16" height="16" viewBox="0 0 16 16"><path d="M8 3.6 V8.8 L3 12.4 M8 8.8 L13 12.4" fill="none" stroke="#2b2b2b" stroke-width="1.8"/>
<polygon points="5.5,4.6 8,0.8 10.5,4.6" fill="#2b2b2b"/><polygon points="0.4,10.4 1,14.6 5.2,13.8" fill="#2b2b2b"/><polygon points="15.6,10.4 15,14.6 10.8,13.8" fill="#2b2b2b"/></svg>
<svg class="a" style="left:65.4px;top:330px;" width="17" height="18" viewBox="0 0 17 18"><path d="M7.35 1.3 H12.4 L15.3 4.3 V15.5 H3.9 L0.8 12.8 V8.2 L1.4 7.6 H7.35 Z" fill="#fff" stroke="#484848" stroke-width="1.05" stroke-linejoin="round"/>
<path d="M3.9 15.5 V11.2 H11 V4.4 H15.3" fill="none" stroke="#6a6a6a" stroke-width="0.9"/><path d="M0.9 8 L3.9 11.2 M7.4 7.6 L11 11.2 M7.6 1.5 L11 4.4" fill="none" stroke="#8a8a8a" stroke-width="0.7"/>
<path d="M1.6 8 H7.4" stroke="#9a9a9a" stroke-width="1"/></svg>
<div class="t" style="left:86.30px;top:332.00px;font-size:13.8px;line-height:15.000px;color:#3a3a3a;transform:scaleX(0.9066);">Crush Bl...</div>
<svg class="a" style="left:152px;top:331px;" width="16" height="16" viewBox="0 0 16 16"><path d="M8 3.6 V8.8 L3 12.4 M8 8.8 L13 12.4" fill="none" stroke="#2b2b2b" stroke-width="1.8"/>
<polygon points="5.5,4.6 8,0.8 10.5,4.6" fill="#2b2b2b"/><polygon points="0.4,10.4 1,14.6 5.2,13.8" fill="#2b2b2b"/><polygon points="15.6,10.4 15,14.6 10.8,13.8" fill="#2b2b2b"/></svg>
<svg class="a" style="left:65.4px;top:356px;" width="17" height="18" viewBox="0 0 17 18"><path d="M7.35 1.3 H12.4 L15.3 4.3 V15.5 H3.9 L0.8 12.8 V8.2 L1.4 7.6 H7.35 Z" fill="#fff" stroke="#484848" stroke-width="1.05" stroke-linejoin="round"/>
<path d="M3.9 15.5 V11.2 H11 V4.4 H15.3" fill="none" stroke="#6a6a6a" stroke-width="0.9"/><path d="M0.9 8 L3.9 11.2 M7.4 7.6 L11 11.2 M7.6 1.5 L11 4.4" fill="none" stroke="#8a8a8a" stroke-width="0.7"/>
<path d="M1.6 8 H7.4" stroke="#9a9a9a" stroke-width="1"/></svg>
<div class="t" style="left:86.30px;top:358.00px;font-size:13.8px;line-height:15.000px;color:#3a3a3a;transform:scaleX(0.9362);">Gearbox Plate Left &lt;1&gt;</div>
<svg class="a" style="left:65.4px;top:382px;" width="17" height="18" viewBox="0 0 17 18"><path d="M7.35 1.3 H12.4 L15.3 4.3 V15.5 H3.9 L0.8 12.8 V8.2 L1.4 7.6 H7.35 Z" fill="#fff" stroke="#484848" stroke-width="1.05" stroke-linejoin="round"/>
<path d="M3.9 15.5 V11.2 H11 V4.4 H15.3" fill="none" stroke="#6a6a6a" stroke-width="0.9"/><path d="M0.9 8 L3.9 11.2 M7.4 7.6 L11 11.2 M7.6 1.5 L11 4.4" fill="none" stroke="#8a8a8a" stroke-width="0.7"/>
<path d="M1.6 8 H7.4" stroke="#9a9a9a" stroke-width="1"/></svg>
<div class="t" style="left:86.30px;top:384.00px;font-size:13.8px;line-height:15.000px;color:#3a3a3a;transform:scaleX(0.9297);">Gearbox plate Right &lt;1&gt;</div>
<svg class="a" style="left:65.4px;top:408px;" width="17" height="18" viewBox="0 0 17 18"><path d="M7.35 1.3 H12.4 L15.3 4.3 V15.5 H3.9 L0.8 12.8 V8.2 L1.4 7.6 H7.35 Z" fill="#fff" stroke="#484848" stroke-width="1.05" stroke-linejoin="round"/>
<path d="M3.9 15.5 V11.2 H11 V4.4 H15.3" fill="none" stroke="#6a6a6a" stroke-width="0.9"/><path d="M0.9 8 L3.9 11.2 M7.4 7.6 L11 11.2 M7.6 1.5 L11 4.4" fill="none" stroke="#8a8a8a" stroke-width="0.7"/>
<path d="M1.6 8 H7.4" stroke="#9a9a9a" stroke-width="1"/></svg>
<div class="t" style="left:86.30px;top:410.00px;font-size:13.8px;line-height:15.000px;color:#3a3a3a;transform:scaleX(0.9125);">Origin Cube &lt;1&gt;</div>
<svg class="a" style="left:65.4px;top:434px;" width="17" height="18" viewBox="0 0 17 18"><path d="M7.35 1.3 H12.4 L15.3 4.3 V15.5 H3.9 L0.8 12.8 V8.2 L1.4 7.6 H7.35 Z" fill="#fff" stroke="#484848" stroke-width="1.05" stroke-linejoin="round"/>
<path d="M3.9 15.5 V11.2 H11 V4.4 H15.3" fill="none" stroke="#6a6a6a" stroke-width="0.9"/><path d="M0.9 8 L3.9 11.2 M7.4 7.6 L11 11.2 M7.6 1.5 L11 4.4" fill="none" stroke="#8a8a8a" stroke-width="0.7"/>
<path d="M1.6 8 H7.4" stroke="#9a9a9a" stroke-width="1"/></svg>
<div class="t" style="left:86.30px;top:436.00px;font-size:13.8px;line-height:15.000px;color:#3a3a3a;transform:scaleX(0.8941);">Rope &lt;1&gt;</div>
<svg class="a" style="left:152px;top:435px;" width="16" height="16" viewBox="0 0 16 16"><path d="M8 3.6 V8.8 L3 12.4 M8 8.8 L13 12.4" fill="none" stroke="#2b2b2b" stroke-width="1.8"/>
<polygon points="5.5,4.6 8,0.8 10.5,4.6" fill="#2b2b2b"/><polygon points="0.4,10.4 1,14.6 5.2,13.8" fill="#2b2b2b"/><polygon points="15.6,10.4 15,14.6 10.8,13.8" fill="#2b2b2b"/></svg>
<svg class="a" style="left:65.4px;top:460px;" width="17" height="18" viewBox="0 0 17 18"><path d="M7.35 1.3 H12.4 L15.3 4.3 V15.5 H3.9 L0.8 12.8 V8.2 L1.4 7.6 H7.35 Z" fill="#fff" stroke="#484848" stroke-width="1.05" stroke-linejoin="round"/>
<path d="M3.9 15.5 V11.2 H11 V4.4 H15.3" fill="none" stroke="#6a6a6a" stroke-width="0.9"/><path d="M0.9 8 L3.9 11.2 M7.4 7.6 L11 11.2 M7.6 1.5 L11 4.4" fill="none" stroke="#8a8a8a" stroke-width="0.7"/>
<path d="M1.6 8 H7.4" stroke="#9a9a9a" stroke-width="1"/></svg>
<div class="t" style="left:86.30px;top:462.00px;font-size:13.8px;line-height:15.000px;color:#3a3a3a;transform:scaleX(0.8829);">Tube 1.5...</div>
<svg class="a" style="left:152px;top:461px;" width="16" height="16" viewBox="0 0 16 16"><path d="M8 3.6 V8.8 L3 12.4 M8 8.8 L13 12.4" fill="none" stroke="#2b2b2b" stroke-width="1.8"/>
<polygon points="5.5,4.6 8,0.8 10.5,4.6" fill="#2b2b2b"/><polygon points="0.4,10.4 1,14.6 5.2,13.8" fill="#2b2b2b"/><polygon points="15.6,10.4 15,14.6 10.8,13.8" fill="#2b2b2b"/></svg>
<svg class="a" style="left:65.4px;top:486px;" width="17" height="18" viewBox="0 0 17 18"><path d="M7.35 1.3 H12.4 L15.3 4.3 V15.5 H3.9 L0.8 12.8 V8.2 L1.4 7.6 H7.35 Z" fill="#fff" stroke="#484848" stroke-width="1.05" stroke-linejoin="round"/>
<path d="M3.9 15.5 V11.2 H11 V4.4 H15.3" fill="none" stroke="#6a6a6a" stroke-width="0.9"/><path d="M0.9 8 L3.9 11.2 M7.4 7.6 L11 11.2 M7.6 1.5 L11 4.4" fill="none" stroke="#8a8a8a" stroke-width="0.7"/>
<path d="M1.6 8 H7.4" stroke="#9a9a9a" stroke-width="1"/></svg>
<div class="t" style="left:86.30px;top:488.00px;font-size:13.8px;line-height:15.000px;color:#3a3a3a;transform:scaleX(0.9441);">Tube 2"x2"x16" &lt;1&gt;</div>
<svg class="a" style="left:65.4px;top:512px;" width="17" height="18" viewBox="0 0 17 18"><path d="M7.35 1.3 H12.4 L15.3 4.3 V15.5 H3.9 L0.8 12.8 V8.2 L1.4 7.6 H7.35 Z" fill="#fff" stroke="#484848" stroke-width="1.05" stroke-linejoin="round"/>
<path d="M3.9 15.5 V11.2 H11 V4.4 H15.3" fill="none" stroke="#6a6a6a" stroke-width="0.9"/><path d="M0.9 8 L3.9 11.2 M7.4 7.6 L11 11.2 M7.6 1.5 L11 4.4" fill="none" stroke="#8a8a8a" stroke-width="0.7"/>
<path d="M1.6 8 H7.4" stroke="#9a9a9a" stroke-width="1"/></svg>
<div class="t" style="left:86.30px;top:514.00px;font-size:13.8px;line-height:15.000px;color:#3a3a3a;transform:scaleX(0.9193);">Climber ...</div>
<svg class="a" style="left:152px;top:513px;" width="16" height="16" viewBox="0 0 16 16"><path d="M8 3.6 V8.8 L3 12.4 M8 8.8 L13 12.4" fill="none" stroke="#2b2b2b" stroke-width="1.8"/>
<polygon points="5.5,4.6 8,0.8 10.5,4.6" fill="#2b2b2b"/><polygon points="0.4,10.4 1,14.6 5.2,13.8" fill="#2b2b2b"/><polygon points="15.6,10.4 15,14.6 10.8,13.8" fill="#2b2b2b"/></svg>
<svg class="a" style="left:45px;top:410px;" width="10" height="14" viewBox="0 0 10 14"><path d="M2 1.8 L7 7 L2 12.2" fill="none" stroke="#3c3c3c" stroke-width="2.4"/></svg>
<svg class="a" style="left:43.4px;top:542px;" width="14" height="10" viewBox="0 0 14 10"><path d="M1.6 2 L7 7.2 L12.4 2" fill="none" stroke="#3c3c3c" stroke-width="2.4"/></svg>
<div class="t" style="left:63.20px;top:540.00px;font-size:13.8px;line-height:15.000px;color:#3a3a3a;transform:scaleX(0.9228);">Loads (0)</div>
<svg class="a" style="left:43.4px;top:568px;" width="14" height="10" viewBox="0 0 14 10"><path d="M1.6 2 L7 7.2 L12.4 2" fill="none" stroke="#3c3c3c" stroke-width="2.4"/></svg>
<div class="t" style="left:63.20px;top:566.00px;font-size:13.8px;line-height:15.000px;color:#3a3a3a;transform:scaleX(0.9373);">Mate Features (3)</div>
<div class="a" style="left:49px;top:585px;width:1px;height:78px;background:#cfcfcf;"></div>
<svg class="a" style="left:83.6px;top:590px;" width="18" height="18" viewBox="0 0 18 18"><rect x="2.4" y="2.4" width="13" height="13" fill="none" stroke="#a8a8a8" stroke-width="1.1" stroke-dasharray="2.2 1.6"/>
<g fill="#fff" stroke="#a8a8a8" stroke-width="0.8"><circle cx="2.4" cy="2.4" r="1.1"/><circle cx="15.4" cy="2.4" r="1.1"/><circle cx="2.4" cy="15.4" r="1.1"/><circle cx="15.4" cy="15.4" r="1.1"/></g>
<rect x="5.4" y="5.2" width="5" height="4.8" fill="none" stroke="#a8a8a8" stroke-width="0.9"/><rect x="7.8" y="7.6" width="5" height="4.8" fill="none" stroke="#a8a8a8" stroke-width="0.9"/></svg>
<div class="t" style="left:105.40px;top:592.00px;font-size:13.8px;line-height:15.000px;color:#a6a6a6;transform:scaleX(0.8904);">Group 1</div>
<svg class="a" style="left:65px;top:618px;" width="10" height="14" viewBox="0 0 10 14"><path d="M2 1.8 L7 7 L2 12.2" fill="none" stroke="#3c3c3c" stroke-width="2.4"/></svg>
<svg class="a" style="left:85px;top:616px;" width="14" height="18" viewBox="0 0 14 18"><path d="M7 1.6 C3.6 1.6 1.8 4 1.8 6.6 C1.8 10 7 15.8 7 15.8 C7 15.8 12.2 10 12.2 6.6 C12.2 4 10.4 1.6 7 1.6 Z" fill="none" stroke="#aaa" stroke-width="1"/><circle cx="7" cy="6.6" r="2.4" fill="none" stroke="#aaa" stroke-width="0.9"/><circle cx="7" cy="6.6" r="0.9" fill="#aaa"/></svg>
<div class="t" style="left:105.40px;top:618.00px;font-size:13.8px;line-height:15.000px;color:#a6a6a6;transform:scaleX(0.9095);">Fastened 1</div>
<svg class="a" style="left:83.6px;top:642px;" width="18" height="18" viewBox="0 0 18 18"><rect x="2.4" y="2.4" width="13" height="13" fill="none" stroke="#8aa2b6" stroke-width="1.1" stroke-dasharray="2.2 1.6"/>
<g fill="#fff" stroke="#8aa2b6" stroke-width="0.8"><circle cx="2.4" cy="2.4" r="1.1"/><circle cx="15.4" cy="2.4" r="1.1"/><circle cx="2.4" cy="15.4" r="1.1"/><circle cx="15.4" cy="15.4" r="1.1"/></g>
<rect x="5.4" y="5.2" width="5" height="4.8" fill="none" stroke="#8aa2b6" stroke-width="0.9"/><rect x="7.8" y="7.6" width="5" height="4.8" fill="none" stroke="#8aa2b6" stroke-width="0.9"/></svg>
<div class="t" style="left:105.40px;top:644.00px;font-size:13.8px;line-height:15.000px;color:#5f7f99;transform:scaleX(0.8998);font-weight:bold;">Group 2</div>
<div class="a" style="left:246px;top:538px;width:32px;height:34px;background:#fff;border:1px solid #c8c8c8;border-left:none;box-sizing:border-box;"></div>
<svg class="a" style="left:250px;top:545px;" width="22" height="22" viewBox="0 0 22 22"><path d="M5 4.4 V19.4" stroke="#2b2b2b" stroke-width="1.3"/><path d="M7.6 6 H20.6 M7.6 10.2 H20.6 M7.6 14.4 H20.6 M7.6 18.6 H20.6" stroke="#2b2b2b" stroke-width="1.1"/><path d="M2.6 2 L5 4.6 L7.4 2" fill="none" stroke="#2b2b2b" stroke-width="1.1"/></svg>
<div class="a" style="left:44px;top:663px;width:11px;height:1px;background:#d5d5d5;"></div>
<div class="a" style="left:245px;top:539px;width:1px;height:32px;background:#fff;"></div>
<div class="a" style="left:416px;top:160px;width:220px;height:225px;background:#fff;box-shadow:1px 5px 11px rgba(0,0,0,0.24),0 0 3px rgba(0,0,0,0.13);"></div>
<div class="a" style="left:416px;top:188px;width:220px;height:1px;background:#d9d9d9;"></div>
<div class="t" style="left:422.40px;top:166.00px;font-size:14px;line-height:16.000px;color:#333;transform:scaleX(0.8459);font-weight:bold;">Group 2</div>
<div class="a" style="left:580px;top:160px;width:28px;height:28px;background:#12890f;"></div>
<svg class="a" style="left:584px;top:165px;" width="20" height="18" viewBox="0 0 20 18"><path d="M3.6 9.2 L8 13.6 L16.6 4.4" fill="none" stroke="#fff" stroke-width="3"/></svg>
<svg class="a" style="left:614px;top:166px;" width="16" height="16" viewBox="0 0 16 16"><path d="M2.8 3 L13 13 M13 3 L2.8 13" fill="none" stroke="#b5222e" stroke-width="2.8"/></svg>
<div class="a" style="left:419px;top:194px;width:214px;height:164px;background:#e5f2fc;border:1px solid #2d5d92;border-radius:2px;box-sizing:border-box;"></div>
<div class="t" style="left:425.00px;top:199.00px;font-size:11px;line-height:12.000px;color:#555;transform:scaleX(0.9048);">Instances</div>
<div class="a" style="left:420px;top:213px;width:212px;height:24px;background:#deeefa;"></div>
<div class="t" style="left:425.90px;top:218.00px;font-size:13.8px;line-height:15.000px;color:#434d56;transform:scaleX(0.9143);">1.5 in. Round Spacer &lt;1&gt;</div>
<svg class="a" style="left:612px;top:220px;" width="10" height="10" viewBox="0 0 10 10"><path d="M1.4 1.4 L8.6 8.6 M8.6 1.4 L1.4 8.6" stroke="#333" stroke-width="1.1"/></svg>
<div class="t" style="left:425.90px;top:242.00px;font-size:13.8px;line-height:15.000px;color:#434d56;transform:scaleX(0.9371);">Crush Block &lt;1&gt;</div>
<svg class="a" style="left:612px;top:244px;" width="10" height="10" viewBox="0 0 10 10"><path d="M1.4 1.4 L8.6 8.6 M8.6 1.4 L1.4 8.6" stroke="#333" stroke-width="1.1"/></svg>
<div class="a" style="left:420px;top:261px;width:212px;height:24px;background:#deeefa;"></div>
<div class="t" style="left:425.90px;top:266.00px;font-size:13.8px;line-height:15.000px;color:#434d56;transform:scaleX(0.9449);">Climber Hook Crush Block &lt;1&gt;</div>
<svg class="a" style="left:612px;top:268px;" width="10" height="10" viewBox="0 0 10 10"><path d="M1.4 1.4 L8.6 8.6 M8.6 1.4 L1.4 8.6" stroke="#333" stroke-width="1.1"/></svg>
<div class="t" style="left:425.90px;top:290.00px;font-size:13.8px;line-height:15.000px;color:#434d56;transform:scaleX(0.9459);">Climber Hook &lt;2&gt;</div>
<svg class="a" style="left:612px;top:292px;" width="10" height="10" viewBox="0 0 10 10"><path d="M1.4 1.4 L8.6 8.6 M8.6 1.4 L1.4 8.6" stroke="#333" stroke-width="1.1"/></svg>
<div class="a" style="left:420px;top:309px;width:212px;height:24px;background:#deeefa;"></div>
<div class="t" style="left:425.90px;top:314.00px;font-size:13.8px;line-height:15.000px;color:#434d56;transform:scaleX(0.9387);">Climber Hook &lt;1&gt;</div>
<svg class="a" style="left:612px;top:316px;" width="10" height="10" viewBox="0 0 10 10"><path d="M1.4 1.4 L8.6 8.6 M8.6 1.4 L1.4 8.6" stroke="#333" stroke-width="1.1"/></svg>
<div class="t" style="left:425.90px;top:338.00px;font-size:13.8px;line-height:15.000px;color:#434d56;transform:scaleX(0.9335);">Tube 1.5"x1.5"x18" &lt;1&gt;</div>
<svg class="a" style="left:612px;top:340px;" width="10" height="10" viewBox="0 0 10 10"><path d="M1.4 1.4 L8.6 8.6 M8.6 1.4 L1.4 8.6" stroke="#333" stroke-width="1.1"/></svg>
<svg class="a" style="left:618px;top:367px;" width="14" height="14" viewBox="0 0 14 14"><circle cx="7" cy="7" r="6" fill="#9c9c9c"/></svg>
<div class="t" style="left:622.20px;top:368.40px;font-size:10.5px;line-height:12.000px;color:#fff;transform:scaleX(0.8731);font-weight:bold;">?</div>
<svg class="a" style="left:0px;top:0px;" width="1920" height="1080" viewBox="0 0 1920 1080"><path d="M986.6 652 Q986.6 647.6 991 647.4 H1001 V740.4 H991 Q986.6 740.2 986.6 736 Z" fill="#cdcdcd" stroke="#222" stroke-width="1.1"/><path d="M989.8 651 V737" stroke="#555" stroke-width="0.9" fill="none"/><path d="M990.5 648.5 V739.5" stroke="#efefef" stroke-width="1" fill="none" opacity="0.6"/><ellipse cx="994.4" cy="656.2" rx="2.2" ry="2.2" fill="#e8e8e8" stroke="#333" stroke-width="0.9"/><ellipse cx="994.4" cy="736.2" rx="2.2" ry="2.2" fill="#e8e8e8" stroke="#333" stroke-width="0.9"/><path d="M1070 641 C1080 641.5 1090 651 1090.6 662 L1070 668 Z" fill="#c9c9c9" stroke="#444" stroke-width="0.9"/><path d="M1071 654 C1076 656 1079 658 1080 662 L1071 665 Z" fill="#555" opacity="0.7"/><path d="M1086.3 357 L1083.7 661" stroke="#3c3c3c" stroke-width="4.4" stroke-linecap="round"/><path d="M1086.3 358 L1083.7 661" stroke="#6e6e6e" stroke-width="1.6"/><polygon points="998.9,428.1 1025.2,450 1025.2,814.9 999,793.1" fill="#2a5b2b" stroke="#0c2a0c" stroke-width="1.1" stroke-linejoin="round" /><polygon points="1025.2,450 1070.9,437.8 1071.1,802.7 1025.2,814.9" fill="#3e8941" stroke="#0c2a0c" stroke-width="1.1" stroke-linejoin="round" /><polygon points="998.9,428.1 1044.1,415.2 1070.9,437.8 1025.2,450" fill="#1d451d" stroke="#0c2a0c" stroke-width="1.3" stroke-linejoin="round" /><polygon points="1001.6,428.9 1043.7,417.5 1045.2,443.3 1025.9,448" fill="#3a8a3d" stroke="none" stroke-width="1" stroke-linejoin="round" /><polygon points="1043.7,417.5 1067.3,437.8 1045.2,443.3" fill="#29592b" stroke="none" stroke-width="1" stroke-linejoin="round" /><path d="M1001.6 428.9 L1043.7 417.5 L1067.3 437.8 L1025.9 448 Z" fill="none" stroke="#0c2a0c" stroke-width="0.9"/><path d="M1044.4 418.5 L1045.2 443" stroke="#2f6d31" stroke-width="1.2"/><ellipse cx="1011.1" cy="431.1" rx="2.0" ry="2.0" fill="#f4f4f4" stroke="#0f2d0f" stroke-width="1.4"/><ellipse cx="1033.7" cy="424.4" rx="2.0" ry="2.0" fill="#f4f4f4" stroke="#0f2d0f" stroke-width="1.4"/><ellipse cx="1033.7" cy="436.1" rx="2.0" ry="2.0" fill="#f4f4f4" stroke="#0f2d0f" stroke-width="1.4"/><ellipse cx="1036.7" cy="453.3" rx="2.3" ry="2.3" fill="#20521f" stroke="#113411" stroke-width="1.3"/><ellipse cx="1059.6" cy="446.7" rx="2.3" ry="2.3" fill="#20521f" stroke="#113411" stroke-width="1.3"/><ellipse cx="1036.7" cy="464.8" rx="2.3" ry="2.3" fill="#20521f" stroke="#113411" stroke-width="1.3"/><ellipse cx="1059.6" cy="458.4" rx="2.3" ry="2.3" fill="#20521f" stroke="#113411" stroke-width="1.3"/><path d="M1016.8 683 Q1016.8 676.8 1022.4 675 L1077.1 659.9 L1104.2 668.2 C1113 671.5 1119 679 1120.1 688.3 C1120.4 692 1119.6 695 1118 697.6 L1083.6 747.6 Q1082.4 749.4 1080 750 L1026.4 765.8 Q1021.6 767 1019 764 Q1016.9 761.6 1016.8 758 Z" fill="#c7c7c7" stroke="#222" stroke-width="1.1" stroke-linejoin="round"/><path d="M1020.4 682.4 Q1020.4 678.2 1024.4 677 L1077.4 662.4" fill="none" stroke="#e9e9e9" stroke-width="2.2"/><path d="M1018.6 683 V759 Q1018.8 763 1022 765" fill="none" stroke="#e3e3e3" stroke-width="2"/><path d="M1020.6 684 Q1020.6 679.6 1025 678.4 L1077.4 663.8 L1103.4 671.6" fill="none" stroke="#555" stroke-width="0.7"/><path d="M1020.6 684 V760 Q1021 764 1025 765.6" fill="none" stroke="#555" stroke-width="0.7"/><ellipse cx="1093.1" cy="698" rx="12.4" ry="13.8" fill="#fff" stroke="#222" stroke-width="1" transform="rotate(14 1093.1 698)"/><path d="M1083.4 706.5 C1087 712.5 1097 713.5 1102.4 707 C1104.6 703.8 1105.6 699 1104.4 694 C1104.4 702 1098 709.5 1090 708.8 C1087 708.4 1084.8 707.6 1083.4 706.5 Z" fill="#d4d4d4" stroke="#444" stroke-width="0.6"/><path d="M1084 689.5 L1091 684 L1098.5 692.5 L1097.6 700.2 L1090 703 Z" fill="#141414"/><circle cx="1092" cy="696.4" r="6.3" fill="#1a1a1a"/><circle cx="1093.4" cy="698" r="1.2" fill="#3a3a3a"/><ellipse cx="1023.6" cy="681.8" rx="2.5" ry="2.3" fill="#cfcfcf" stroke="#2a2a2a" stroke-width="1.0"/><ellipse cx="1078.9" cy="666.4" rx="2.5" ry="2.3" fill="#cfcfcf" stroke="#2a2a2a" stroke-width="1.0"/><ellipse cx="1093.1" cy="674.9" rx="2.5" ry="2.3" fill="#cfcfcf" stroke="#2a2a2a" stroke-width="1.0"/><ellipse cx="1115.6" cy="691.1" rx="2.5" ry="2.3" fill="#cfcfcf" stroke="#2a2a2a" stroke-width="1.0"/><ellipse cx="1093.1" cy="720.6" rx="2.5" ry="2.3" fill="#cfcfcf" stroke="#2a2a2a" stroke-width="1.0"/><ellipse cx="1078.9" cy="746" rx="2.5" ry="2.3" fill="#cfcfcf" stroke="#2a2a2a" stroke-width="1.0"/><ellipse cx="1023.9" cy="761.7" rx="2.5" ry="2.3" fill="#cfcfcf" stroke="#2a2a2a" stroke-width="1.0"/><ellipse cx="1036.8" cy="718.2" rx="2.5" ry="2.3" fill="#cfcfcf" stroke="#2a2a2a" stroke-width="1.0"/><polygon points="1211.9,340 1233.2,352 1233.3,731.8 1211.9,714.8" fill="#c18e38" stroke="none" stroke-width="1" stroke-linejoin="round" /><polygon points="1233.2,352 1268.1,345 1268.1,722.8 1233.3,731.8" fill="#dda940" stroke="none" stroke-width="1" stroke-linejoin="round" /><path d="M1233.3 356 V730.6" stroke="#a87a28" stroke-width="1.5"/><path d="M1212.9 342 V714.4 L1233.3 730.7 L1267.1 722" fill="none" stroke="#f8bf4c" stroke-width="2" stroke-linejoin="round"/><path d="M1267.1 346 V722" stroke="#f8bf4c" stroke-width="2"/><ellipse cx="1222.4" cy="712" rx="1.6" ry="1.6" fill="#b98834" stroke="#a87c2d" stroke-width="0.8"/><defs><clipPath id="hk"><path d="M1184.6 310.2 L1281.4 282 Q1284.4 281.6 1286.5 284.3 L1307.4 303.1 Q1309 305.4 1307.9 307.7 L1303.8 312.8 L1268.1 345.9 L1264.1 350.5 L1234.5 359.6 L1229.4 357.6 L1214.2 341.3 L1212.4 342.2 L1208.5 341.6 L1192.8 367.8 Q1191 370.4 1188.7 369.8 L1183.6 368.8 L1162.2 350.5 Q1160.2 348.4 1161.2 345.4 L1172.4 317.9 Q1175 313.4 1179.5 311.8 Z"/></clipPath></defs><path d="M1184.6 310.2 L1281.4 282 Q1284.4 281.6 1286.5 284.3 L1307.4 303.1 Q1309 305.4 1307.9 307.7 L1303.8 312.8 L1268.1 345.9 L1264.1 350.5 L1234.5 359.6 L1229.4 357.6 L1214.2 341.3 L1212.4 342.2 L1208.5 341.6 L1192.8 367.8 Q1191 370.4 1188.7 369.8 L1183.6 368.8 L1162.2 350.5 Q1160.2 348.4 1161.2 345.4 L1172.4 317.9 Q1175 313.4 1179.5 311.8 Z" fill="#e9b245"/><g clip-path="url(#hk)"><polygon points="1184.6,310.2 1281.4,282 1286,290 1266.5,313 1233.5,321.6 1214.5,326.8 1206,338 1186,319" fill="#ecb648" stroke="none" stroke-width="1" stroke-linejoin="round" /><polygon points="1217,307 1250.5,294 1266.4,308.6 1266.4,313.6 1233.5,321.4" fill="#efba4b" stroke="none" stroke-width="1" stroke-linejoin="round" /><polygon points="1174.3,323.1 1179.4,327.6 1169.8,348.3 1166.1,343.1" fill="#c8963a" stroke="none" stroke-width="1" stroke-linejoin="round" /><polygon points="1182.4,327.4 1188.3,322.4 1199.4,328.3 1192,338" fill="#d9a640" stroke="none" stroke-width="1" stroke-linejoin="round" /><polygon points="1180.9,330.6 1192,338.7 1183.1,360.9 1170.9,351.3" fill="#c9983b" stroke="none" stroke-width="1" stroke-linejoin="round" /><polygon points="1195,339.4 1202.4,333.5 1203.1,339.4 1189.8,360.2 1187.6,358" fill="#d6a340" stroke="none" stroke-width="1" stroke-linejoin="round" /><polygon points="1250,293.3 1277.5,286.3 1278.3,295 1265,306.7" fill="#d8a53f" stroke="none" stroke-width="1" stroke-linejoin="round" /><path d="M1250 293.3 L1277.5 286.3" stroke="#b8862e" stroke-width="1.2"/><path d="M1250.4 293.8 L1258.5 301" stroke="#c08d32" stroke-width="1"/><defs><linearGradient id="hs" x1="0" y1="0" x2="1" y2="0.2"><stop offset="0" stop-color="#c9973b"/><stop offset="1" stop-color="#e6b046"/></linearGradient></defs><polygon points="1283.6,289.6 1287.8,287 1303.4,301 1299.6,304.2" fill="url(#hs)" stroke="none" stroke-width="1" stroke-linejoin="round" /><polygon points="1266.7,312.5 1300,305.8 1305,310 1268.3,344.6" fill="#dda841" stroke="none" stroke-width="1" stroke-linejoin="round" /><polygon points="1233.3,321.7 1265.8,314.2 1265.8,346.7 1233.3,356.7 1215,340 1214,330" fill="#dca63f" stroke="none" stroke-width="1" stroke-linejoin="round" /><polygon points="1214.6,328 1233,322.4 1233.6,341 1222,347" fill="#e3ae45" stroke="none" stroke-width="1" stroke-linejoin="round" /><g fill="none" stroke="#f8bf4c" stroke-linejoin="round" stroke-linecap="round"><path d="M1184.6 310.2 L1281.4 282 Q1284.4 281.6 1286.5 284.3 L1307.4 303.1 Q1309 305.4 1307.9 307.7 L1303.8 312.8 L1268.1 345.9 L1264.1 350.5 L1234.5 359.6 L1229.4 357.6 L1214.2 341.3 L1212.4 342.2 L1208.5 341.6 L1192.8 367.8 Q1191 370.4 1188.7 369.8 L1183.6 368.8 L1162.2 350.5 Q1160.2 348.4 1161.2 345.4 L1172.4 317.9 Q1175 313.4 1179.5 311.8 Z" stroke-width="5"/><path d="M1169.8 349.8 L1180.2 326.9 Q1183 320.4 1188.6 321.4 L1199 327.6 Q1203 330.4 1200.4 333.4 L1193.5 339.6 L1186.1 359.4" stroke-width="3"/><path d="M1170.4 351 L1183.6 362" stroke-width="2.2"/><path d="M1266.7 311.5 V346.4" stroke-width="2.6"/><path d="M1266.7 312.6 L1301 305.4" stroke-width="2"/><path d="M1233.3 358 L1266.7 348" stroke-width="2.4"/><path d="M1278 286.4 L1278.6 295.2 L1290 303.4 M1278.6 295.2 L1265.4 307.4 M1283 290 L1279.6 296" stroke-width="2"/><path d="M1265.4 309.6 L1291.4 302.6" stroke-width="1.8"/><path d="M1214.4 341 L1233.2 322" stroke-width="1.4"/></g><g fill="none" stroke="#a97b28"><path d="M1184.6 314.6 L1198.7 326.1" stroke-width="1.2" stroke-dasharray="5 2.4"/><path d="M1217.2 307.6 L1233.5 320.9" stroke-width="1.6"/><path d="M1214.6 327 L1230.6 322.6" stroke-width="1.6"/><path d="M1233.8 321.8 L1265.4 314.4" stroke-width="1.4"/><path d="M1234 356 L1262 347.6" stroke-width="1.2"/><path d="M1181.4 331.4 L1191.6 338.6" stroke-width="1.1"/><path d="M1175.2 324.4 L1179.4 328" stroke-width="1"/><path d="M1171.6 351.8 L1182.8 360.8" stroke-width="1.1"/><path d="M1193.8 341 L1187.4 357.4" stroke-width="1"/><path d="M1166.4 343.6 L1168.6 348.4" stroke-width="1"/></g><path d="M1217 330.6 L1231.4 342.4 M1216.4 334.6 L1229.6 345.4" stroke="#efbb52" stroke-width="1.8" fill="none"/><path d="M1218.4 341.4 L1225 349.4" stroke="#b98a30" stroke-width="1" stroke-dasharray="2 1.4"/></g><polygon points="1280.8,297.3 1289.2,303.3 1266.9,309.3 1268.8,306.6" fill="#ffffff" stroke="none" stroke-width="1" stroke-linejoin="round" /><ellipse cx="1240" cy="326.7" rx="2" ry="2" fill="#f0c660" stroke="#c8963a" stroke-width="1.2"/><ellipse cx="1263.3" cy="320.4" rx="1.9" ry="1.9" fill="#a8772a" stroke="#a9792b" stroke-width="1"/><ellipse cx="1263.3" cy="343.3" rx="1.9" ry="1.9" fill="#a8772a" stroke="#a9792b" stroke-width="1"/><ellipse cx="1240" cy="349.6" rx="2" ry="2" fill="#f0c660" stroke="#c8963a" stroke-width="1.2"/><ellipse cx="1230.8" cy="352.1" rx="1.9" ry="1.9" fill="#a8772a" stroke="#a9792b" stroke-width="1"/><polygon points="919.4,816.5 964.3,803.5 990.7,826.1 990.7,870.9 946.1,884.4 919.4,862.4" fill="#bcbcbc" stroke="none" stroke-width="1" stroke-linejoin="round" /><polygon points="919.4,816.5 964.3,803.5 990.7,826.1 946.1,839" fill="#c4c4c4" stroke="none" stroke-width="1" stroke-linejoin="round" /><polygon points="919.4,816.5 946.1,839 946.1,884.4 919.4,862.4" fill="#b4b4b4" stroke="none" stroke-width="1" stroke-linejoin="round" /><g fill="none" stroke="#1c1c1c" stroke-width="1"><path d="M919.4 816.5 L964.3 803.5 L990.7 826.1 L946.1 839 Z"/><path d="M919.4 816.5 V862.4 L946.1 884.4 L990.7 870.9 V826.1 M946.1 839 V884.4"/><path d="M964.3 803.5 V848.6 L919.4 862.4 M964.3 848.6 L990.7 870.9" stroke-width="0.9"/></g><ellipse cx="955.3" cy="821.4" rx="17.6" ry="9" fill="#e6eff7" stroke="#2a5a84" stroke-width="0.9"/><ellipse cx="955.3" cy="821.6" rx="13.4" ry="6.6" fill="#c2c2c2" stroke="#1d4e73" stroke-width="1.7"/><path d="M959.6 820.4 L966 815.6 L972.4 819.4 L972 824.8 L964 829.4 L959.8 826.4 Z" fill="#f1f3f5"/><path d="M966 815.6 L962.4 819" stroke="#1d4e73" stroke-width="1.8"/><path d="M959.8 826.8 L962 828.4" stroke="#1d4e73" stroke-width="1.4"/><path d="M955 801.4 V818" stroke="#8ccaf0" stroke-width="2.6"/><circle cx="955" cy="821.2" r="4.6" fill="#111"/><circle cx="955" cy="821.2" r="2.7" fill="#fff"/><circle cx="955" cy="821.2" r="1.3" fill="#111"/><path d="M974.4 815 L983.4 812.6" stroke="#b5e07a" stroke-width="1.9"/><circle cx="966.8" cy="831.6" r="1.8" fill="#e8a3ad"/><path d="M968 833 L971 834.4" stroke="#e8c0c6" stroke-width="1.6"/></svg>
<svg class="a" style="left:0px;top:0px;" width="1920" height="1080" viewBox="0 0 1920 1080"><polygon points="1822.8,100.6 1837.6,100.6 1830.2,91.3" fill="#9b9b9b"/><polygon points="1822.8,231.1 1837.6,231.1 1830.2,240.4" fill="#9b9b9b"/><polygon points="1765,158.5 1765,173.1 1755.2,165.8" fill="#9b9b9b"/><polygon points="1895,158.5 1895,173.1 1904.8,165.8" fill="#9b9b9b"/><path d="M1809 102 C1797 105 1787 111.5 1781.5 119" fill="none" stroke="#9b9b9b" stroke-width="4.6"/><polygon points="1776.4,125 1777.8,113.4 1788.6,124.4" fill="#9b9b9b"/><path d="M1851.4 102 C1863.4 105 1873.4 111.5 1878.9 119" fill="none" stroke="#9b9b9b" stroke-width="4.6"/><polygon points="1884,125 1882.6,113.4 1871.8,124.4" fill="#9b9b9b"/><path d="M1827 125.4 Q1831 124 1835 125.6 L1865 142.4 Q1869.2 145 1869.2 150 V186 Q1869 190.6 1865 192.4 L1828 207.4 Q1823.6 208.8 1820 206.6 L1795.4 191 Q1792.2 188.6 1792.2 184 V146 Q1792.4 141.6 1796.4 139.6 Z" fill="#e1e7ec"/><path d="M1803 142.5 L1831 130.5 Q1834 129.6 1837 131 L1858 143.6 Q1860 145.6 1857 147.4 L1826 157.6 Q1822.4 158.4 1819.4 156.6 L1802.4 146.4 Q1800.2 144.2 1803 142.5 Z" fill="#fdfdfe"/><path d="M1796.8 152 Q1796.6 148.4 1799.6 150 L1814.4 160 Q1816.6 162 1816.6 165 V193.6 Q1816.4 197.2 1813.4 195.4 L1799.6 186 Q1796.8 184 1796.8 180.6 Z" fill="#fdfdfe"/><path d="M1826.6 167 Q1826.6 163.6 1830 162.4 L1861 152.4 Q1864.8 151.6 1864.8 155.4 V183 Q1864.6 186.6 1861.4 188 L1830.4 200.6 Q1826.6 201.8 1826.6 198 Z" fill="#fdfdfe"/><circle cx="1821" cy="160.6" r="6.4" fill="#f4f7fa"/><ellipse cx="1861.5" cy="148" rx="3.6" ry="5" fill="#f4f7fa"/><ellipse cx="1822" cy="203" rx="6" ry="2.6" fill="#f4f7fa"/><path d="M1788.1 186.7 L1840.4 171.5" stroke="#35b035" stroke-width="0.9" opacity="0.5"/><path d="M1788.1 135.6 V186.7" stroke="#2626c0" stroke-width="1.25"/><path d="M1788.1 186.7 L1818.2 212.4" stroke="#d43030" stroke-width="1.25"/><path d="M1841.4 156 V171" stroke="#fff" stroke-width="0.9" opacity="0.9"/></svg>
<div class="t" style="left:1784.40px;top:119.60px;font-size:14.5px;line-height:16.000px;color:#2222c8;transform:scaleX(0.8581);">Z</div>
<div class="t" style="left:1819.00px;top:208.60px;font-size:14.5px;line-height:16.000px;color:#e03030;transform:scaleX(0.8272);">X</div>
<div class="t" style="left:1843.60px;top:164.00px;font-size:11.5px;line-height:12.000px;color:#dde4dd;transform:scaleX(0.9126);">Y</div>
<div class="t" style="left:1821.6px;top:133.4px;font-size:10px;line-height:11px;color:#333;transform-origin:50% 50%;transform:rotate(28deg) skewX(-28deg) scaleX(0.9);">Top</div>
<div class="t" style="left:1793.4px;top:167.4px;font-size:10px;line-height:11px;color:#444;transform-origin:50% 50%;transform:rotate(33deg) scaleX(0.78) skewX(10deg);">Front</div>
<div class="t" style="left:1829.6px;top:171.8px;font-size:13px;line-height:13px;color:#2b2b2b;transform-origin:50% 50%;transform:rotate(-13deg) scaleX(0.88);">Right</div>
<svg class="a" style="left:1865px;top:222px;" width="22" height="20" viewBox="0 0 22 20"><polygon points="10.6,1.8 18.6,4.6 18.6,14.2 10.8,18 2,13.6 2,4.8" fill="#bdbdbd" stroke="#333" stroke-width="1" stroke-linejoin="round"/>
<polygon points="2,4.8 10.6,1.8 18.6,4.6 10.4,8" fill="#f2f2f2" stroke="#333" stroke-width="0.9" stroke-linejoin="round"/><polygon points="2,4.8 10.4,8 10.8,18 2,13.6" fill="#9a9a9a" stroke="#333" stroke-width="0.9" stroke-linejoin="round"/></svg>
<svg class="a" style="left:1892px;top:229px;" width="8" height="5" viewBox="0 0 8 5"><polygon points="0,0.2 7.4,0.2 3.7,4.2" fill="#222"/></svg>
<div class="a" style="left:1888px;top:400px;width:33px;height:199px;background:#fff;border:1px solid #b8b8b8;box-sizing:border-box;"></div>
<div class="a" style="left:1889px;top:433px;width:31px;height:1px;background:#b8b8b8;"></div>
<div class="a" style="left:1889px;top:466px;width:31px;height:1px;background:#b8b8b8;"></div>
<div class="a" style="left:1889px;top:499px;width:31px;height:1px;background:#b8b8b8;"></div>
<div class="a" style="left:1889px;top:532px;width:31px;height:1px;background:#b8b8b8;"></div>
<div class="a" style="left:1889px;top:565px;width:31px;height:1px;background:#b8b8b8;"></div>
<div class="a" style="left:1888px;top:609px;width:33px;height:101px;background:#fff;border:1px solid #b8b8b8;box-sizing:border-box;"></div>
<div class="a" style="left:1889px;top:643px;width:31px;height:1px;background:#b8b8b8;"></div>
<div class="a" style="left:1889px;top:676px;width:31px;height:1px;background:#b8b8b8;"></div>
<svg class="a" style="left:1894px;top:405.5px;" width="24" height="24" viewBox="0 0 24 24"><rect x="3.4" y="4" width="16.6" height="16" rx="3" fill="none" stroke="#222" stroke-width="1.3"/><path d="M7 8.4 H16.6 M9 11.2 H16.6 M9 14 H16.6 M7 16.6 H16.6" stroke="#222" stroke-width="1.3"/></svg>
<svg class="a" style="left:1894px;top:438px;" width="24" height="24" viewBox="0 0 24 24"><g fill="#fff" stroke="#222" stroke-width="1.1" stroke-linejoin="round"><polygon points="12.6,6.6 20,9.8 20,18.4 12.8,22 5.2,18.4 5.2,9.8"/><path d="M5.2 9.8 L12.8 13.2 L20 9.8 M12.8 13.2 V22" fill="none"/></g>
<rect x="1" y="3" width="10.4" height="8" fill="#1a56b0"/><path d="M4.4 3 V11 M7.9 3 V11 M1 5.7 H11.4 M1 8.4 H11.4" stroke="#dfe8f5" stroke-width="0.8"/></svg>
<svg class="a" style="left:1894px;top:471px;" width="24" height="24" viewBox="0 0 24 24"><rect x="3.6" y="3.6" width="4.6" height="4.6" fill="#aaa" stroke="#666" stroke-width="0.8"/><path d="M6 10 V13.6 H10.6" fill="none" stroke="#1a56b0" stroke-width="1.1" stroke-dasharray="1.8 1.2"/>
<path d="M14.4 9.4 H18.2 L20.2 11.4 V20 H12 L10.2 18.4 V15.6 H14.4 Z" fill="#fff" stroke="#222" stroke-width="1" stroke-linejoin="round"/><path d="M12 17.4 H17.2 V11.6" fill="none" stroke="#555" stroke-width="0.7"/></svg>
<svg class="a" style="left:1894px;top:504px;" width="24" height="24" viewBox="0 0 24 24"><rect x="3.4" y="13.6" width="10" height="6" fill="#fff" stroke="#222" stroke-width="1.1"/><rect x="13.4" y="3.6" width="6.4" height="10" fill="none" stroke="#1a56b0" stroke-width="1.1" stroke-dasharray="1.8 1.2"/>
<circle cx="16.6" cy="16.6" r="3" fill="#cfe0f2" stroke="#333" stroke-width="0.9"/><circle cx="16.6" cy="16.6" r="1.1" fill="#1a56b0"/></svg>
<svg class="a" style="left:1894px;top:537px;" width="24" height="24" viewBox="0 0 24 24"><polygon points="11.6,3.6 4.6,9.6 3.6,16 10.4,21" fill="#1a56b0"/><polygon points="11.6,3.6 18.8,9.6 19.8,15.6 12.4,14" fill="#9fc3ea"/><polygon points="12.4,14 19.8,15.6 13.4,21 10.4,21" fill="#a0a0a0"/><polygon points="11.6,3.6 12.4,14 4.6,9.6" fill="#5a8fd0"/><polygon points="4.6,9.6 12.4,14 10.4,21 3.6,16" fill="#1a56b0"/><path d="M11.6 3.6 L12.4 14 L4.6 9.6 M12.4 14 L19.8 15.6 M12.4 14 L10.4 21" stroke="#fff" stroke-width="0.8" fill="none"/></svg>
<svg class="a" style="left:1894px;top:570px;" width="24" height="24" viewBox="0 0 24 24"><rect x="3.4" y="2.6" width="9.6" height="8.4" fill="#222"/><path d="M6.6 2.6 V11 M9.8 2.6 V11 M3.4 5.4 H13 M3.4 8.2 H13" stroke="#fff" stroke-width="0.8"/>
<path d="M5 8.6 C1.8 12 1.8 18 5 21.6 M19.4 8.6 C22.6 12 22.6 18 19.4 21.6" fill="none" stroke="#222" stroke-width="1.7"/><path d="M7 12.4 C10 11 11.6 19.6 17 19 M17 11.6 C13 11.6 11.6 19.8 7 20" fill="none" stroke="#222" stroke-width="2"/></svg>
<div class="a" style="left:1895px;top:615px;width:22px;height:22px;background:#1a56b0;border:1px solid #cfd6e2;box-sizing:border-box;"></div>
<div class="t" style="left:1897.00px;top:619.60px;font-size:15.5px;line-height:17.000px;color:#fff;transform:scaleX(0.7218);font-weight:bold;font-family:'Liberation Serif',serif;">MK</div>
<div class="a" style="left:1894px;top:648px;width:23px;height:23px;background:#cfcfcf;border-radius:3px;"></div>
<svg class="a" style="left:1894px;top:648px;" width="23" height="23" viewBox="0 0 23 23"><rect x="3" y="8.6" width="17" height="10.4" rx="2.4" fill="#1e1e1e"/><circle cx="8" cy="13.4" r="2.7" fill="#fff" stroke="#3a78c8" stroke-width="1"/><circle cx="15.2" cy="13.4" r="2.7" fill="#fff" stroke="#3a78c8" stroke-width="1"/><circle cx="8" cy="13.4" r="1" fill="#1e1e1e"/><circle cx="15.2" cy="13.4" r="1" fill="#1e1e1e"/>
<path d="M5.4 3.4 L7.6 6.6 M11.4 3 V6.4 M17 3.4 L15 6.6" stroke="#3a78c8" stroke-width="1.1"/><path d="M8.6 17.4 Q11.6 18.8 14.6 17.4" fill="none" stroke="#3a78c8" stroke-width="0.9"/></svg>
<div class="a" style="left:1894px;top:681px;width:23px;height:23px;background:#1a56b0;border:1px solid #cfd6e2;box-sizing:border-box;"></div>
<svg class="a" style="left:1894px;top:681px;" width="23" height="23" viewBox="0 0 23 23"><path d="M4.6 6.6 C7 5.6 9.4 5.8 11 7 V17 C9.4 15.8 7 15.6 4.6 16.6 Z M18.4 6.6 C16 5.6 13.6 5.8 12 7 V17 C13.6 15.8 16 15.6 18.4 16.6 Z" fill="#fff"/></svg>
<div class="a" style="left:10px;top:1034px;width:45px;height:43.5px;background:#1c1c1c;border:2px solid #fff;border-radius:7px;box-sizing:border-box;"></div>
<svg class="a" style="left:20px;top:1044px;" width="26" height="26" viewBox="0 0 26 26"><defs><linearGradient id="wg" x1="0" y1="0" x2="1" y2="1"><stop offset="0" stop-color="#63cbff"/><stop offset="1" stop-color="#1595ea"/></linearGradient></defs>
<rect x="0.8" y="0.8" width="11.1" height="11.1" fill="url(#wg)"/><rect x="13.1" y="0.8" width="11.1" height="11.1" fill="url(#wg)"/><rect x="0.8" y="13.1" width="11.1" height="11.1" fill="url(#wg)"/><rect x="13.1" y="13.1" width="11.1" height="11.1" fill="url(#wg)"/></svg>
<div class="a" style="left:57px;top:1039.7px;width:219.6px;height:32.5px;background:#3a3a3a;border-radius:16.5px;border-top:1px solid #4a4a4a;box-sizing:border-box;"></div>
<svg class="a" style="left:66px;top:1046px;" width="20" height="20" viewBox="0 0 20 20"><circle cx="8.8" cy="8.6" r="5.6" fill="none" stroke="#e8e8e8" stroke-width="1.5"/><path d="M12.8 12.8 L16.4 16.8" stroke="#e8e8e8" stroke-width="1.7" stroke-linecap="round"/></svg>
<div class="t" style="left:94.20px;top:1048.00px;font-size:14.8px;line-height:16.000px;color:#e6e6e6;transform:scaleX(0.8658);">Search</div>
<svg class="a" style="left:225px;top:1043px;" width="46" height="28" viewBox="0 0 46 28"><path d="M2 12.4 C2 6 9.6 2.6 18.4 2.6 C28 2.6 35.4 6.8 35.4 13 C35.4 19 28.4 22.4 19.4 22.4 C16 22.4 14.6 21.2 12.8 21.2 C10.4 21.2 9.6 24.6 6.8 24.6 C5 24.6 6 22 6.6 20.4 C4 18.6 2 16 2 12.4 Z" fill="#c98a52"/>
<path d="M2 12.4 C2 6 9.6 2.6 18.4 2.6 C28 2.6 35.4 6.8 35.4 13 C30 9 12 7 4 15 Z" fill="#dba169" opacity="0.8"/>
<ellipse cx="9.4" cy="8.6" rx="2.6" ry="1.6" fill="#f2a03a"/><ellipse cx="17.4" cy="5.6" rx="2.8" ry="1.6" fill="#e8452c"/><ellipse cx="26" cy="6.4" rx="2.8" ry="1.6" fill="#58c043"/>
<ellipse cx="8" cy="14.2" rx="2.6" ry="1.6" fill="#f4d12e"/><ellipse cx="33" cy="12.8" rx="2.6" ry="1.6" fill="#3b8fe4"/><ellipse cx="27" cy="18" rx="2.8" ry="1.6" fill="#c04ad8"/>
<path d="M16 17.6 L36.4 6" stroke="#b9763c" stroke-width="2" stroke-linecap="round"/><path d="M35.6 6.4 L41.8 2.4 L38.4 7.2 Z" fill="#d8553a"/><path d="M33.6 7.4 L36.6 5.8" stroke="#5b8fd8" stroke-width="2.2"/></svg>
<svg class="a" style="left:288px;top:1043px;" width="27" height="25" viewBox="0 0 27 25"><defs><linearGradient id="tv" x1="0" y1="0" x2="1" y2="1"><stop offset="0" stop-color="#fff"/><stop offset="1" stop-color="#cfcfcf"/></linearGradient></defs>
<rect x="1.2" y="8" width="17.6" height="15.6" rx="1.6" fill="#6a6a6a"/><rect x="7" y="1.6" width="18.4" height="16" rx="1.6" fill="url(#tv)"/><rect x="7" y="8" width="11.8" height="9.6" fill="#bdbdbd" opacity="0.75"/></svg>
<svg class="a" style="left:332px;top:1043px;" width="26" height="26" viewBox="0 0 26 26"><defs><linearGradient id="eg1" x1="0" y1="0" x2="1" y2="0.4"><stop offset="0" stop-color="#2a9fe0"/><stop offset="0.55" stop-color="#36c3b0"/><stop offset="1" stop-color="#7fdc5a"/></linearGradient>
<linearGradient id="eg2" x1="0" y1="0" x2="0.6" y2="1"><stop offset="0" stop-color="#1b7fd4"/><stop offset="1" stop-color="#114a8b"/></linearGradient></defs>
<circle cx="13" cy="12.8" r="12.2" fill="url(#eg1)"/>
<path d="M1 15.6 C0 8 6 3.6 12 4.4 C6.6 6.4 5.6 12.6 8.6 17.6 C11.6 22.4 18 24.2 23.4 19.6 C19.6 26.8 4 27.2 1 15.6 Z" fill="url(#eg2)"/>
<path d="M9.8 13.4 C9.6 9.6 13.6 8 16.4 9.8 C18.8 11.4 18.4 14.4 16.2 15.8 C14.4 16.8 15.2 19 18.4 19 C21.6 19 24.4 16.8 25.2 13.6 C25.2 17.8 22.6 21.6 18.6 22 C13.6 22.6 10 18.2 9.8 13.4 Z" fill="#1c1c1c"/>
<path d="M9.8 13.4 C9.6 9.6 13.6 8 16.4 9.8 C18.8 11.4 18.4 14.4 16.2 15.8 C14.4 16.8 15.2 19 18.4 19 C16 20.4 10 19.4 9.8 13.4 Z" fill="#1868b8"/></svg>
<svg class="a" style="left:376px;top:1043px;" width="27" height="25" viewBox="0 0 27 25"><path d="M1.4 4.4 Q1.4 2.4 3.4 2.4 H9 L11.4 4.8 H23.6 Q25.4 4.8 25.4 6.6 V21.4 Q25.4 23.2 23.6 23.2 H3.2 Q1.4 23.2 1.4 21.4 Z" fill="#e8a820"/>
<path d="M1.4 8 Q1.4 6.4 3 6.4 H23.8 Q25.4 6.4 25.4 8 V21.6 Q25.4 23.2 23.8 23.2 H3 Q1.4 23.2 1.4 21.6 Z" fill="#fbd050"/>
<rect x="6" y="17" width="14.6" height="6.2" rx="1.2" fill="#1a7fd6"/><rect x="6" y="17" width="14.6" height="2.4" rx="1.2" fill="#3a98e6"/></svg>
<svg class="a" style="left:420px;top:1043px;" width="26" height="26" viewBox="0 0 26 26"><circle cx="13" cy="12.8" r="12.2" fill="#fbc116"/>
<path d="M13 12.8 L2.43 6.7 A12.2 12.2 0 0 1 23.57 6.7 Z" fill="#e33b2e"/><path d="M13 0.6 A12.2 12.2 0 0 1 23.57 6.7 H13 Z" fill="#e33b2e"/>
<path d="M13 12.8 L2.43 6.7 A12.2 12.2 0 0 0 13 25 L18.3 15.9 Z" fill="#2da94f"/><path d="M2.43 6.7 A12.2 12.2 0 0 0 13 25 L7.7 15.8 Z" fill="#2da94f"/>
<path d="M23.57 6.7 H13 L18.3 15.9 L13 25 A12.2 12.2 0 0 0 23.57 6.7 Z" fill="#fbc116"/>
<circle cx="13" cy="12.8" r="5.8" fill="#fff"/><circle cx="13" cy="12.8" r="4.5" fill="#3b7fe8"/></svg>
<svg class="a" style="left:464px;top:1043px;" width="26" height="26" viewBox="0 0 26 26"><circle cx="13" cy="12.8" r="12.2" fill="#5865f2"/>
<path d="M6.4 9.2 C8 7.8 9.6 7.4 10.6 7.4 L11 8.2 C12.4 8 13.6 8 15 8.2 L15.4 7.4 C16.4 7.4 18 7.8 19.6 9.2 C21 12 21.4 14.6 21.2 17 C19.8 18.2 18.2 18.8 17 18.8 L16.2 17.6 L17 17 C14.4 18 11.6 18 9 17 L9.8 17.6 L9 18.8 C7.8 18.8 6.2 18.2 4.8 17 C4.6 14.6 5 12 6.4 9.2 Z" fill="#fff"/>
<ellipse cx="10.4" cy="13.6" rx="1.6" ry="1.8" fill="#5865f2"/><ellipse cx="15.6" cy="13.6" rx="1.6" ry="1.8" fill="#5865f2"/></svg>
<svg class="a" style="left:508px;top:1045px;" width="28" height="28" viewBox="0 0 28 28"><rect x="1.2" y="1.6" width="18" height="17.6" rx="2.4" fill="#f1f1f1"/>
<g fill="#d8442c"><rect x="3.6" y="4" width="2.6" height="2.6"/><rect x="7.2" y="4" width="2.6" height="2.6"/><rect x="10.8" y="4" width="2.6" height="2.6"/><rect x="3.6" y="7.6" width="2.6" height="2.6"/><rect x="3.6" y="11.2" width="2.6" height="2.6"/></g>
<rect x="7.6" y="8" width="9" height="8.6" fill="#d9d9d9"/><path d="M6.4 15.8 H16 V6" fill="none" stroke="#8c8c94" stroke-width="1.6"/>
<path d="M15.6 10 L15.8 21.6 M15.6 16.6 L22 15.2" stroke="#9aa0a8" stroke-width="1.4"/>
<circle cx="14.6" cy="23.6" r="2" fill="none" stroke="#4aa8e8" stroke-width="1.4"/><circle cx="23.2" cy="14.8" r="2" fill="none" stroke="#4aa8e8" stroke-width="1.4"/></svg>
<svg class="a" style="left:552px;top:1043px;" width="26" height="26" viewBox="0 0 26 26"><circle cx="13" cy="12.8" r="10.6" fill="#2a2a2a" stroke="#c8c8c8" stroke-width="1.3"/>
<g fill="none" stroke="#c8c8c8" stroke-width="1.3"><path d="M13.4 3.4 C9.6 5.6 9.8 10.8 13.4 12.6 C16.6 11.6 18.4 8.6 17.2 5.4"/><path d="M21.8 16.6 C21.8 12.2 17.2 9.8 13.8 12.2 C13.2 15.4 15 18.6 18.4 19"/><path d="M4.6 17.4 C8.4 19.6 12.8 17 13 13 C10.6 10.8 7 10.8 5 13.4"/></g></svg>
<div class="a" style="left:430px;top:1072.4px;width:6.4px;height:2.4px;background:#8c8c8c;border-radius:1.2px;"></div>
<div class="a" style="left:513.4px;top:1072.4px;width:15px;height:2.4px;background:#767676;border-radius:1.2px;"></div>
<div class="a" style="left:562.2px;top:1072.4px;width:5.8px;height:2.4px;background:#8c8c8c;border-radius:1.2px;"></div>
<svg class="a" style="left:1598px;top:1050px;" width="16" height="12" viewBox="0 0 16 12"><path d="M2.6 8.8 L7.8 3.6 L13 8.8" fill="none" stroke="#f0f0f0" stroke-width="1.5"/></svg>
<svg class="a" style="left:1628px;top:1046px;" width="20" height="20" viewBox="0 0 20 20"><circle cx="9.8" cy="9.6" r="8.3" fill="#d9161c"/><path d="M5.8 13 V6.4 L9.8 10.4 L13.8 6.4 V13" fill="none" stroke="#fff" stroke-width="1.7" stroke-linejoin="round"/></svg>
<svg class="a" style="left:1658px;top:1045px;" width="24" height="22" viewBox="0 0 24 22"><g fill="none" stroke="#f0f0f0" stroke-width="1.3"><path d="M4.6 9.6 A7.2 7.2 0 0 1 17.4 6.2"/><path d="M18 3 V6.8 H14.2"/><path d="M8.6 17.6 A7.2 7.2 0 0 1 4.6 13.6"/><path d="M4.4 18 V14.2 H8.2"/></g><circle cx="16" cy="15" r="3.8" fill="#1a7fe0"/></svg>
<svg class="a" style="left:1694px;top:1046px;" width="16" height="20" viewBox="0 0 16 20"><ellipse cx="7.9" cy="9.6" rx="6.1" ry="8.3" fill="#0b7ad6"/><path d="M4.6 6.4 L11 12.4 L7.9 15.2 V4 L11 6.8 L4.6 12.8" fill="none" stroke="#fff" stroke-width="1.1"/></svg>
<svg class="a" style="left:1725px;top:1045px;" width="18" height="22" viewBox="0 0 18 22"><rect x="6.2" y="2" width="5.6" height="10.4" rx="2.8" fill="none" stroke="#e8e8e8" stroke-width="1.2"/><path d="M3.4 9.4 V10 A5.6 5.6 0 0 0 14.6 10 V9.4 M9 15.6 V18.6" fill="none" stroke="#e8e8e8" stroke-width="1.2"/></svg>
<svg class="a" style="left:1755px;top:1046px;" width="22" height="20" viewBox="0 0 22 20"><rect x="2.4" y="2.4" width="13" height="10.6" fill="none" stroke="#eee" stroke-width="1.2"/><path d="M9 13 V16.4 M5.4 16.6 H13" stroke="#eee" stroke-width="1.2"/><rect x="14.4" y="1.6" width="3.6" height="6" fill="#1c1c1c" stroke="#eee" stroke-width="1.1"/><path d="M16.2 7.6 V17 H13.6" fill="none" stroke="#eee" stroke-width="1.1"/></svg>
<svg class="a" style="left:1780px;top:1046px;" width="24" height="20" viewBox="0 0 24 20"><path d="M2.6 7.4 H5.4 L9.4 3.6 V15.8 L5.4 12 H2.6 Z" fill="none" stroke="#eee" stroke-width="1.2" stroke-linejoin="round"/><path d="M11.6 7.2 Q13 9.7 11.6 12.2 M13.8 5.4 Q16 9.7 13.8 14" fill="none" stroke="#eee" stroke-width="1.1"/><path d="M16.2 3.6 Q19 9.7 16.2 15.8" fill="none" stroke="#666" stroke-width="1"/></svg>
<div class="t" style="left:1834.20px;top:1041.00px;font-size:12px;line-height:14.000px;color:#fff;transform:scaleX(0.9488);">3:53 PM</div>
<div class="t" style="left:1815.40px;top:1057.40px;font-size:12px;line-height:14.000px;color:#fff;transform:scaleX(1.0190);">10/25/2025</div>
<svg class="a" style="left:1882px;top:1046px;" width="22" height="22" viewBox="0 0 22 22"><path d="M9.4 3.6 C6.2 3.6 5 6.2 5 8.8 C5 11.8 3.8 13 2.6 14 V15 H16.2 V14 C15 13 13.8 11.8 13.8 8.8 C13.8 6.2 12.6 3.6 9.4 3.6 Z" fill="#f0f0f0"/><path d="M7.4 16.2 a2 2 0 0 0 4 0 Z" fill="#f0f0f0"/></svg>
<div class="t" style="left:1888.20px;top:1053.60px;font-size:8px;line-height:9.000px;color:#1c1c1c;transform:scaleX(1.1000);font-weight:bold;">z</div>
<div class="t" style="left:1893.60px;top:1047.00px;font-size:8.5px;line-height:10.000px;color:#f0f0f0;transform:scaleX(1.0824);font-weight:bold;">z</div>
<svg class="a" style="left:1891px;top:1028px;" width="18" height="5" viewBox="0 0 18 5"><path d="M2.6 4.2 Q9 0.6 15.4 4.2" fill="none" stroke="#4a4a4a" stroke-width="1.3"/></svg>
</div></body></html>
